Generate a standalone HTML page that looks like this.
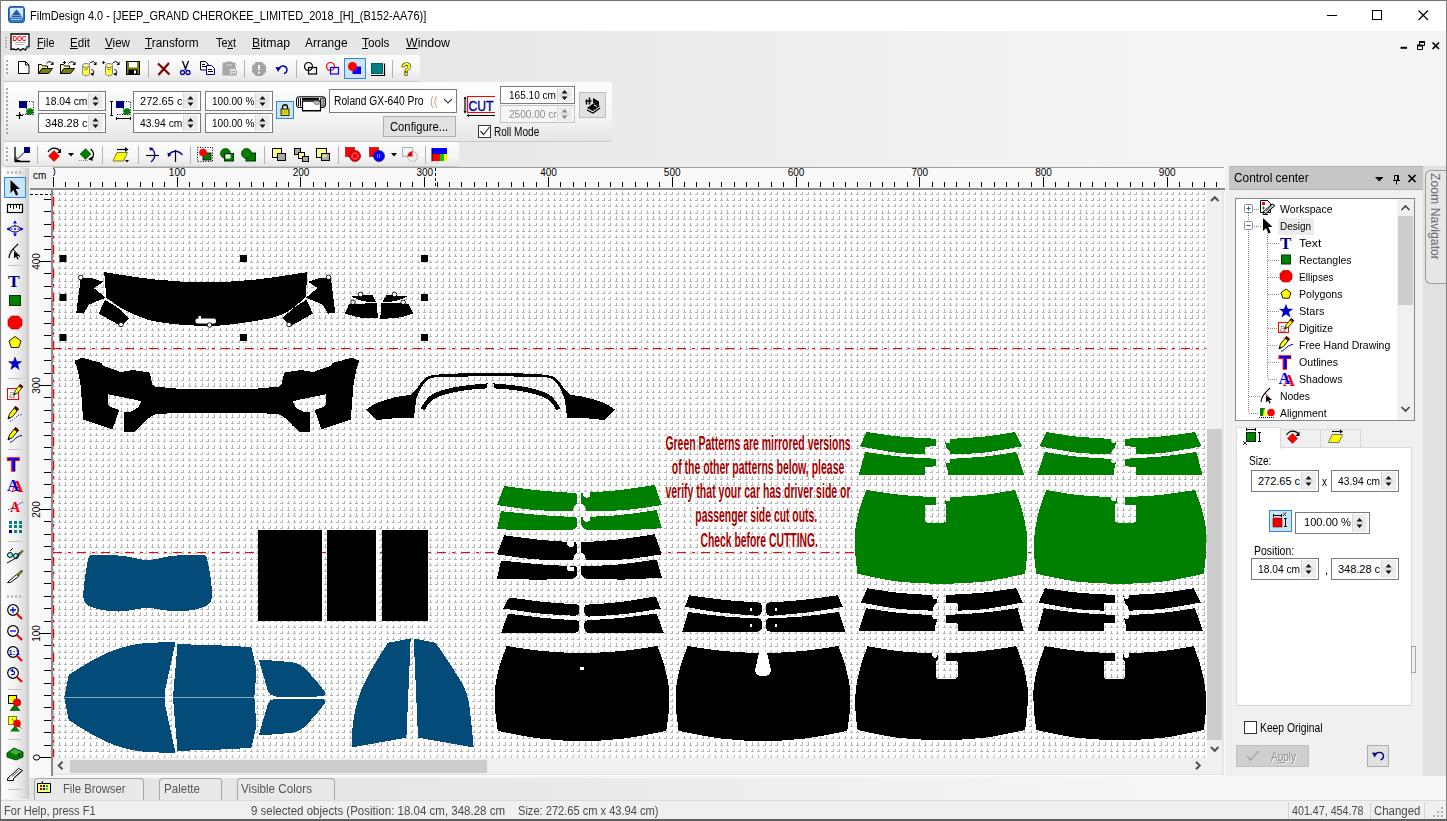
<!DOCTYPE html>
<html><head><meta charset="utf-8"><title>FilmDesign 4.0</title>
<style>*{box-sizing:border-box;margin:0;padding:0}
html,body{width:1447px;height:821px;overflow:hidden}
body{position:relative;background:#f0f0f0;font-family:"Liberation Sans",sans-serif;font-size:12px;color:#000}
.a{position:absolute}
.t{position:absolute;white-space:nowrap}
.tb{position:absolute;border-radius:3px;background:linear-gradient(#fdfdfd,#f6f6f6 55%,#e6e6e6);box-shadow:0 1px 0 #c8c8c8}
u{text-decoration:underline;text-underline-offset:1px}
</style></head>
<body>
<div class="a" style="left:0px;top:0px;width:1447px;height:31px;background:#fff;border-top:1px solid #707070"></div>
<svg class="a" style="left:8px;top:6px" width="18" height="18" viewBox="0 0 18 18"><rect x="0.500" y="0.500" width="16" height="16" rx="2.500" fill="#2d7bd0" stroke="#1b5aa8"/><rect x="2" y="2" width="13" height="9.500" fill="#d8e8f8"/><path d="M8.500,3.500l4.500,5.500h-9z" fill="#1c5bb0"/><rect x="3.500" y="9.500" width="10" height="1.500" fill="#1c5bb0"/><path d="M3.500,13.500h2M6.500,13.500h2M9.500,13.500h2M12.500,13.500h1" stroke="#e8f0ff"/></svg>
<div class="t" style="left:30.3px;top:9px;font-size:12px;line-height:14px;transform:scaleX(0.914);transform-origin:0 0;">FilmDesign 4.0 - [JEEP_GRAND CHEROKEE_LIMITED_2018_[H]_(B152-AA76)]</div>
<svg class="a" style="left:1320px;top:5px" width="120" height="22" viewBox="0 0 120 22"><path d="M7,10.500h10" stroke="#000" fill="none"/><rect x="52.500" y="5.500" width="9" height="9" fill="none" stroke="#000"/><path d="M98.500,5.500l9.500,9.500m0,-9.500l-9.500,9.500" stroke="#000" stroke-width="1.200" fill="none"/></svg>
<div class="a" style="left:1px;top:31px;width:1445px;height:136px;background:linear-gradient(90deg,#e3e3e3,#e9e9e9 35%,#f4f4f4 80%)"></div>
<svg class="a" style="left:4px;top:36px" width="4" height="14" viewBox="0 0 4 14"><path d="M2,1v12" stroke="#a8a8a8" stroke-width="2" stroke-dasharray="1.500 1.500" fill="none"/></svg>
<svg class="a" style="left:10px;top:33px" width="21" height="19" viewBox="0 0 21 19"><path d="M1,1h18v12.500h-2l-1.500,3.500-2.500-1.500-2.500,2-2.500-2-2,1.500-2-1-3,0.500z" fill="#fff" stroke="#000" stroke-width="1.300"/><text x="2.500" y="7.500" font-size="6.500" font-weight="bold" fill="#e00000" font-family="Liberation Sans,sans-serif" textLength="14">DOC</text><path d="M5,9.500h11M5,11.500h9" stroke="#b8b8b8" fill="none"/><rect x="16" y="13" width="2.500" height="2.500" fill="#0a8080"/></svg>
<div class="t" style="left:37.3px;top:36px;font-size:12.5px;line-height:14.5px;transform:scaleX(0.864);transform-origin:0 0;"><u>F</u>ile</div>
<div class="t" style="left:70px;top:36px;font-size:12.5px;line-height:14.5px;transform:scaleX(0.929);transform-origin:0 0;"><u>E</u>dit</div>
<div class="t" style="left:105px;top:36px;font-size:12.5px;line-height:14.5px;transform:scaleX(0.931);transform-origin:0 0;"><u>V</u>iew</div>
<div class="t" style="left:145px;top:36px;font-size:12.5px;line-height:14.5px;transform:scaleX(0.947);transform-origin:0 0;"><u>T</u>ransform</div>
<div class="t" style="left:215.5px;top:36px;font-size:12.5px;line-height:14.5px;transform:scaleX(0.872);transform-origin:0 0;">Te<u>x</u>t</div>
<div class="t" style="left:252px;top:36px;font-size:12.5px;line-height:14.5px;transform:scaleX(0.977);transform-origin:0 0;"><u>B</u>itmap</div>
<div class="t" style="left:305px;top:36px;font-size:12.5px;line-height:14.5px;transform:scaleX(0.956);transform-origin:0 0;">Arran<u>g</u>e</div>
<div class="t" style="left:362px;top:36px;font-size:12.5px;line-height:14.5px;transform:scaleX(0.942);transform-origin:0 0;"><u>T</u>ools</div>
<div class="t" style="left:405.5px;top:36px;font-size:12.5px;line-height:14.5px;transform:scaleX(0.990);transform-origin:0 0;"><u>W</u>indow</div>
<svg class="a" style="left:1395px;top:38px" width="48" height="14" viewBox="0 0 48 14"><path d="M5.500,9.800h6.500" stroke="#000" stroke-width="2" fill="none"/><path d="M24.500,4v3.500h5v-3.500zM22.500,7.500v4h5v-4z" fill="none" stroke="#000"/><path d="M24,4h6M22,7.500h6" stroke="#000" stroke-width="2"/><path d="M37.500,4.500l6.500,6.500m0-6.500l-6.500,6.500" stroke="#000" stroke-width="1.700" fill="none"/></svg>
<div class="tb" style="left:4px;top:55px;width:416px;height:26px"></div>
<div class="tb" style="left:4px;top:82px;width:608px;height:58.500px"></div>
<div class="tb" style="left:4px;top:142px;width:455px;height:24px"></div>
<svg class="a" style="left:5px;top:60px" width="4" height="16" viewBox="0 0 4 16"><path d="M2,0v16" stroke="#a8a8a8" stroke-width="2" stroke-dasharray="2 2" fill="none"/></svg>
<svg class="a" style="left:5px;top:88px" width="4" height="47" viewBox="0 0 4 47"><path d="M2,0v47" stroke="#a8a8a8" stroke-width="2" stroke-dasharray="2 2" fill="none"/></svg>
<svg class="a" style="left:5px;top:147px" width="4" height="14" viewBox="0 0 4 14"><path d="M2,0v14" stroke="#a8a8a8" stroke-width="2" stroke-dasharray="2 2" fill="none"/></svg>
<div class="a" style="left:38px;top:91px;width:68px;height:20px;background:#fff;border:1px solid #7a7a7a"></div>
<div class="a" style="left:88px;top:93px;width:15px;height:16px;background:#ececec;border-left:1px solid #d8d8d8"></div>
<svg class="a" style="left:88px;top:93px" width="15" height="16" viewBox="0 0 15 16"><path d="M4.500,6.5 l3-3.500 3,3.500zM4.500,9.5 l3,3.500 3-3.500z" fill="#111"/><path d="M2,8h11" stroke="#d0d0d0"/></svg>
<div class="t" style="left:44.6px;top:94.5px;font-size:11px;line-height:13px;transform:scaleX(0.937);transform-origin:0 0;color:#000;">18.04 cm</div>
<div class="a" style="left:38px;top:113px;width:68px;height:20px;background:#fff;border:1px solid #7a7a7a"></div>
<div class="a" style="left:88px;top:115px;width:15px;height:16px;background:#ececec;border-left:1px solid #d8d8d8"></div>
<svg class="a" style="left:88px;top:115px" width="15" height="16" viewBox="0 0 15 16"><path d="M4.500,6.5 l3-3.500 3,3.500zM4.500,9.5 l3,3.500 3-3.500z" fill="#111"/><path d="M2,8h11" stroke="#d0d0d0"/></svg>
<div class="t" style="left:44.6px;top:116.5px;font-size:11px;line-height:13px;transform:scaleX(1.005);transform-origin:0 0;color:#000;">348.28 c</div>
<div class="a" style="left:133px;top:91px;width:68px;height:20px;background:#fff;border:1px solid #7a7a7a"></div>
<div class="a" style="left:183px;top:93px;width:15px;height:16px;background:#ececec;border-left:1px solid #d8d8d8"></div>
<svg class="a" style="left:183px;top:93px" width="15" height="16" viewBox="0 0 15 16"><path d="M4.500,6.5 l3-3.500 3,3.500zM4.500,9.5 l3,3.500 3-3.500z" fill="#111"/><path d="M2,8h11" stroke="#d0d0d0"/></svg>
<div class="t" style="left:139.6px;top:94.5px;font-size:11px;line-height:13px;transform:scaleX(1.005);transform-origin:0 0;color:#000;">272.65 c</div>
<div class="a" style="left:133px;top:113px;width:68px;height:20px;background:#fff;border:1px solid #7a7a7a"></div>
<div class="a" style="left:183px;top:115px;width:15px;height:16px;background:#ececec;border-left:1px solid #d8d8d8"></div>
<svg class="a" style="left:183px;top:115px" width="15" height="16" viewBox="0 0 15 16"><path d="M4.500,6.5 l3-3.500 3,3.500zM4.500,9.5 l3,3.500 3-3.500z" fill="#111"/><path d="M2,8h11" stroke="#d0d0d0"/></svg>
<div class="t" style="left:139.6px;top:116.5px;font-size:11px;line-height:13px;transform:scaleX(0.937);transform-origin:0 0;color:#000;">43.94 cm</div>
<div class="a" style="left:205px;top:91px;width:68px;height:20px;background:#fff;border:1px solid #7a7a7a"></div>
<div class="a" style="left:255px;top:93px;width:15px;height:16px;background:#ececec;border-left:1px solid #d8d8d8"></div>
<svg class="a" style="left:255px;top:93px" width="15" height="16" viewBox="0 0 15 16"><path d="M4.500,6.5 l3-3.500 3,3.500zM4.500,9.5 l3,3.500 3-3.500z" fill="#111"/><path d="M2,8h11" stroke="#d0d0d0"/></svg>
<div class="t" style="left:211.6px;top:94.5px;font-size:11px;line-height:13px;transform:scaleX(0.912);transform-origin:0 0;color:#000;">100.00 %</div>
<div class="a" style="left:205px;top:113px;width:68px;height:20px;background:#fff;border:1px solid #7a7a7a"></div>
<div class="a" style="left:255px;top:115px;width:15px;height:16px;background:#ececec;border-left:1px solid #d8d8d8"></div>
<svg class="a" style="left:255px;top:115px" width="15" height="16" viewBox="0 0 15 16"><path d="M4.500,6.5 l3-3.500 3,3.500zM4.500,9.5 l3,3.500 3-3.500z" fill="#111"/><path d="M2,8h11" stroke="#d0d0d0"/></svg>
<div class="t" style="left:211.6px;top:116.5px;font-size:11px;line-height:13px;transform:scaleX(0.912);transform-origin:0 0;color:#000;">100.00 %</div>
<div class="a" style="left:329px;top:89px;width:128px;height:23.5px;background:#fff;border:1px solid #7a7a7a"></div>
<div class="t" style="left:333.5px;top:94px;font-size:12px;line-height:14px;transform:scaleX(0.855);transform-origin:0 0;">Roland GX-640 Pro</div>
<div class="t" style="left:429.5px;top:94px;font-size:12px;line-height:14px;transform:scaleX(0.939);transform-origin:0 0;color:#c8a070;clip-path:inset(0 0 0 0);">((</div>
<div class="a" style="left:383px;top:116px;width:73px;height:20.5px;background:#e1e1e1;border:1px solid #adadad"></div>
<div class="t" style="left:389.5px;top:119.5px;font-size:12px;line-height:14px;transform:scaleX(0.937);transform-origin:0 0;">Configure...</div>
<div class="a" style="left:500px;top:86px;width:75px;height:18px;background:#fff;border:1px solid #7a7a7a"></div>
<div class="a" style="left:557px;top:88px;width:15px;height:14px;background:#ececec;border-left:1px solid #d8d8d8"></div>
<svg class="a" style="left:557px;top:88px" width="15" height="14" viewBox="0 0 15 14"><path d="M4.500,5.5 l3-3.500 3,3.500zM4.500,8.5 l3,3.500 3-3.500z" fill="#111"/><path d="M2,7h11" stroke="#d0d0d0"/></svg>
<div class="t" style="left:509px;top:88.5px;font-size:11px;line-height:13px;transform:scaleX(0.915);transform-origin:0 0;color:#000;">165.10 cm</div>
<div class="a" style="left:500px;top:105px;width:75px;height:18px;background:#f6f6f6;border:1px solid #c4c4c4"></div>
<div class="a" style="left:557px;top:107px;width:15px;height:14px;background:#ececec;border-left:1px solid #d8d8d8"></div>
<svg class="a" style="left:557px;top:107px" width="15" height="14" viewBox="0 0 15 14"><path d="M4.500,5.5 l3-3.500 3,3.500zM4.500,8.5 l3,3.500 3-3.500z" fill="#8a8a8a"/><path d="M2,7h11" stroke="#d0d0d0"/></svg>
<div class="t" style="left:508.5px;top:107.5px;font-size:11px;line-height:13px;transform:scaleX(0.914);transform-origin:0 0;color:#8a8a8a;">2500.00 cr</div>
<div class="t" style="left:494px;top:124.5px;font-size:12px;line-height:14px;transform:scaleX(0.837);transform-origin:0 0;">Roll Mode</div>
<div class="a" style="left:2px;top:168px;width:27px;height:631px;background:linear-gradient(90deg,#fefefe,#f4f4f4 45%,#dcdcdc 85%,#c8c8c8)"></div>
<svg class="a" style="left:0;top:0" width="620" height="800" viewBox="0 0 620 800">
<g transform="translate(18,61)"><path d="M0.500,0.500h7l3.500,3.500v8.500h-10.500z" fill="#fff" stroke="#000"/><path d="M7.500,0.500v3.500h3.500" fill="none" stroke="#000"/></g>
<g transform="translate(38,61)"><path d="M0.5,12.500V3.500h3l1,1.500h5v2.500" fill="#ffffa0" stroke="#000"/><path d="M0.500,12.500l3.500-5h10.500l-4,5z" fill="#808000" stroke="#000"/><path d="M8.500,2.500c2-2.500 5-2.500 6,0.500" fill="none" stroke="#000"/><path d="M15.500,0.500v3.500h-3z" fill="#000"/></g>
<g transform="translate(60,61)"><path d="M0.5,12.500V3.500h3l1,1.500h5v2.500" fill="#ffffa0" stroke="#000"/><path d="M0.500,12.500l3.500-5h10.500l-4,5z" fill="#808000" stroke="#000"/><path d="M8.500,2.500c2-2.500 5-2.500 6,0.500" fill="none" stroke="#000"/><path d="M15.500,0.500v3.500h-3z" fill="#000"/><path d="M3,1.500h3M4.500,0v3" stroke="#000"/></g>
<g transform="translate(82,61)"><path d="M0.500,4.500v8c0,3 7,3 7,0v-8" fill="#ffff40" stroke="#808080"/><ellipse cx="4" cy="4.500" rx="3.500" ry="2" fill="#ffffa0" stroke="#808080"/><path d="M2,7.500l2,1.500 2-1.500" stroke="#909000" fill="none"/><path d="M7.500,2.500c2-2.500 5-2.500 6,0.500" fill="none" stroke="#000"/><path d="M14.500,0.500v3.500h-3z" fill="#000"/><path d="M9.500,8.500c2.500,0.500 3,3 1,5" fill="none" stroke="#000"/><path d="M8,13l3.500,2 0-3.500z" fill="#000"/></g>
<g transform="translate(105,61)"><path d="M0.500,4.500v8c0,3 7,3 7,0v-8" fill="#ffff40" stroke="#808080"/><ellipse cx="4" cy="4.500" rx="3.500" ry="2" fill="#ffffa0" stroke="#808080"/><path d="M2,7.500l2,1.500 2-1.500" stroke="#909000" fill="none"/><path d="M7.500,2.500c2-2.500 5-2.500 6,0.500" fill="none" stroke="#000"/><path d="M14.500,0.500v3.500h-3z" fill="#000"/><path d="M9.500,8.500c2.500,0.500 3,3 1,5" fill="none" stroke="#000"/><path d="M8,13l3.500,2 0-3.500z" fill="#000"/><path d="M-3,1.500h3M-1.500,0v3" stroke="#000"/></g>
<g transform="translate(126,61)"><rect x="0.500" y="0.500" width="13" height="13" fill="#808000" stroke="#000"/><rect x="3" y="1" width="8" height="5.500" fill="#fff"/><rect x="2.500" y="8.500" width="9" height="5" fill="#000"/><rect x="8" y="9.500" width="2" height="3" fill="#fff"/></g>
<path d="M148.500,60v18M244.500,60v18M296.500,60v18M392.500,60v18" stroke="#b4b4b4"/>
<g transform="translate(157,62)"><path d="M1,1.500l11.500,11M12,1l-10.500,12" stroke="#800000" stroke-width="2.200" fill="none"/></g>
<g transform="translate(180,61)"><path d="M2.500,0l3.500,9M8.500,0l-3.500,9" stroke="#000" stroke-width="1.300" fill="none"/><circle cx="2.500" cy="11.500" r="2" fill="none" stroke="#0000a0" stroke-width="1.300"/><circle cx="8" cy="11.500" r="2" fill="none" stroke="#0000a0" stroke-width="1.300"/></g>
<g transform="translate(200,61)"><path d="M0.500,0.500h5l2.500,2.500v6h-7.500z" fill="#fff" stroke="#000"/><path d="M2,3.500h3M2,5.500h4" stroke="#000"/><path d="M6.500,4.500h5l3,3v6h-8z" fill="#fff" stroke="#000080"/><path d="M8,8.500h4M8,10.500h5" stroke="#000"/></g>
<g transform="translate(222,61)"><path d="M1.500,2.500h11v11h-11z" fill="#a6a6a6" stroke="#a6a6a6" stroke-linejoin="round" stroke-width="2"/><rect x="4" y="0.500" width="6" height="3" rx="1" fill="#a6a6a6"/><path d="M4,4h6" stroke="#d8d8d8"/><path d="M7.500,7.500h5l2,2v4.500h-7z" fill="#e4e4e4" stroke="#a6a6a6"/><path d="M9,10.500h4M9,12.500h4" stroke="#a6a6a6"/></g>
<g transform="translate(252,62)"><path d="M4,0h6l4,4v6l-4,4h-6l-4-4v-6z" fill="#a4a4a4"/><rect x="6" y="3" width="2" height="5" fill="#f4f4f4"/><rect x="6" y="9.500" width="2" height="2" fill="#f4f4f4"/></g>
<g transform="translate(275,64)"><path d="M3.500,4.500c3-4 8-3 8.500,1c0,2.500-1.500,3.500-3,4" fill="none" stroke="#0000a0" stroke-width="1.400"/><path d="M0.500,3l5.500,0.500-3,4.500z" fill="#0000a0"/></g>
<g transform="translate(304,62)"><circle cx="4.500" cy="4.500" r="4" fill="none" stroke="#000" stroke-width="1.200"/><rect x="4.500" y="5.500" width="8" height="6.500" fill="none" stroke="#000" stroke-width="1.200"/></g>
<g transform="translate(326,62)"><circle cx="4.500" cy="4.500" r="4" fill="none" stroke="#f00" stroke-width="1.200"/><rect x="4.500" y="5.500" width="8" height="6.500" fill="none" stroke="#00f" stroke-width="1.200"/></g>
<rect x="344.500" y="58.500" width="21" height="20" fill="#cce4f7" stroke="#3287d8"/>
<g transform="translate(348,62)"><rect x="4.500" y="4.500" width="8.500" height="7.500" fill="#00f"/><circle cx="4.500" cy="4.500" r="4.500" fill="#f00"/></g>
<g transform="translate(371,63)"><rect x="0.500" y="0.500" width="11" height="10" fill="#008080" stroke="#006060"/><path d="M0,12.500h13.500v-12" stroke="#000" stroke-width="1.200" fill="none"/></g>
<text x="401.500" y="74.500" font-family="Liberation Sans,sans-serif" font-weight="bold" font-size="16" fill="#ffff00" stroke="#000" stroke-width="1.100" paint-order="stroke">?</text>
<g transform="translate(16,101)"><rect x="3" y="0" width="8" height="7" fill="#000080"/><rect x="10.500" y="0.500" width="7" height="13" fill="none" stroke="#000" stroke-dasharray="1 1.500"/><path d="M4,13.500h13" stroke="#000" stroke-dasharray="1 1.500"/><circle cx="14" cy="10.500" r="3.300" fill="#008000"/><path d="M0,14.500h7M3.500,11v7" stroke="#000" stroke-width="1.200"/></g>
<g transform="translate(113,101)"><rect x="3" y="0" width="8" height="7" fill="#000080"/><rect x="10.500" y="0.500" width="7" height="13" fill="none" stroke="#000" stroke-dasharray="1 1.500"/><path d="M4,13.500h13" stroke="#000" stroke-dasharray="1 1.500"/><circle cx="14" cy="10.500" r="3.300" fill="#008000"/><path d="M-1.500,0v15M-3,0.500h3M-3,14.500h3M3,17.500h15M3.500,16v3M17.500,16v3" stroke="#000" fill="none"/></g>
<rect x="276.500" y="101.500" width="17" height="17" fill="#cce4f7" stroke="#3287d8"/>
<g transform="translate(280,104)"><path d="M2.500,5v-2c0-3 5-3 5,0v2" fill="none" stroke="#000" stroke-width="1.300"/><rect x="1" y="5" width="8" height="6.500" fill="#e8e800" stroke="#000" stroke-width="0.800"/><path d="M2,7h6M2,9h6" stroke="#707000" stroke-dasharray="1 1"/></g>
<g transform="translate(296,94)"><g transform="scale(1,1.080)"><rect x="0.500" y="2.500" width="29" height="10" rx="3" fill="#fff" stroke="#000"/><path d="M2.500,4v7M4.500,3.500v8" stroke="#000"/><rect x="24.500" y="4" width="3.500" height="7" fill="#b0b0b0" stroke="#444"/><path d="M6,3.500h17v2h-17z" fill="#000"/><path d="M6.500,6.500h18v9h-18z" fill="#fff" stroke="#000" stroke-width="1.200"/><path d="M17,6.500h6v3h-4z" fill="#c8c8c8" stroke="#555" stroke-width="0.700"/></g></g>
<g transform="translate(464,96)"><path d="M31,0.500h-27.500v16h27.500" fill="none" stroke="#f00" stroke-width="1.200"/><text x="4.500" y="14.500" font-family="Liberation Sans,sans-serif" font-size="15" fill="#000090" textLength="25" lengthAdjust="spacingAndGlyphs" stroke="#000090" stroke-width="0.400">CUT</text><path d="M1,1.500v15M3,19.500h28" stroke="#000" stroke-width="1.200"/><path d="M-0.500,3l1.500-2.500 1.500,2.500zM-0.500,15l1.500,2.500 1.500-2.500zM5,18l-2.500,1.500 2.500,1.500z" fill="#000"/></g>
<rect x="579.500" y="92.500" width="26" height="25" fill="#e1e1e1" stroke="#bdbdbd"/>
<g transform="translate(584,96)"><path d="M3,12l7-5 6,3-7,5z" fill="#000"/><path d="M3,14l6,3 7-5" fill="none" stroke="#000" stroke-width="1.200"/><path d="M9,2l6,3.500v4l-6-3z" fill="#000"/><path d="M2.500,3.500v5M5.500,1.500v7M1.500,5h6" stroke="#000" stroke-width="1.500"/><path d="M10,9l3,1.500" stroke="#fff"/></g>
<rect x="478.500" y="125.500" width="12" height="12" fill="#fff" stroke="#333"/><path d="M480.500,131l3,3.500 6-7.500" stroke="#333" stroke-width="1.200" fill="none"/>
<path d="M444,99l4,4 4-4" stroke="#444" stroke-width="1.200" fill="none"/>
<path d="M37.500,146v18M102.500,146v18M138.500,146v18M190.500,146v18M264.500,146v18M338.500,146v18M425.500,146v18" stroke="#b4b4b4"/>
<g transform="translate(14,147)"><path d="M1,0v14.500h15" fill="none" stroke="#000" stroke-width="1.300"/><path d="M2,13.500l8-8" stroke="#000"/><path d="M2,9.500v4h4" fill="none" stroke="#000"/><rect x="10" y="0" width="6" height="6" fill="#000080"/></g>
<g transform="translate(47,147)"><path d="M7,3.500l5.500,5.500-5.500,5.500-5.500-5.500z" fill="#f00" stroke="#600" stroke-width="0.500"/><path d="M1,5c3-5 9-5 12-1" fill="none" stroke="#000" stroke-width="1.200"/><path d="M14,1.500v4.500h-4z" fill="#000"/></g>
<path d="M68,153h6l-3,3.500z" fill="#000"/>
<g transform="translate(79,147)"><path d="M6.500,1.500l5.500,5.500-5.500,5.500-5.500-5.500z" fill="#008000" stroke="#040" stroke-width="0.500"/><path d="M11.500,2c4,3 4,8 0,10.500" fill="none" stroke="#000" stroke-width="1.200"/><path d="M9,12l4.500,2 0-4.500z" fill="#000"/><path d="M0,13.500h10" stroke="#888" stroke-dasharray="1 1"/></g>
<g transform="translate(113,147)"><path d="M4,5.500h10.500l-4,8.500h-10.500z" fill="#ffff00" stroke="#555" stroke-width="0.800"/><path d="M4,2.500h10" stroke="#000" stroke-width="1.200"/><path d="M12,0l3.500,2.500-3.500,2.500z" fill="#000"/><path d="M12,13h4l-2,2.500z" fill="#000"/></g>
<g transform="translate(146,147)"><path d="M0,8.500h13" stroke="#000" stroke-width="1.200"/><path d="M5,1c5,4 5,10 0,14" fill="none" stroke="#0000a0" stroke-width="1.300"/><path d="M3,0.500l4.500,0.500-3,3z" fill="#0000a0"/></g>
<g transform="translate(167,147)"><path d="M8.500,3v12" stroke="#000" stroke-width="1.200"/><path d="M1.500,8c4-5 10-5 14,0" fill="none" stroke="#0000a0" stroke-width="1.300"/><path d="M0.500,5.500l0.500,4.500 3.500-2z" fill="#0000a0"/></g>
<g transform="translate(197,147)"><rect x="0.500" y="0.500" width="15" height="14" fill="none" stroke="#000" stroke-dasharray="1 1.500"/><rect x="6" y="6" width="8" height="7" fill="#008000" stroke="#000" stroke-width="0.800"/><circle cx="6" cy="5.500" r="3.800" fill="#f00"/></g>
<g transform="translate(220,148)"><circle cx="5.500" cy="5.500" r="5" fill="#008000" stroke="#003000" stroke-width="0.700"/><rect x="4.500" y="5.500" width="9" height="7.500" fill="#008000" stroke="#003000"/><rect x="5.500" y="6.500" width="5" height="4" fill="#fff"/></g>
<g transform="translate(241,148)"><rect x="5" y="5" width="9.500" height="8" fill="#008000" stroke="#003000"/><circle cx="5.500" cy="5.500" r="5" fill="#008000" stroke="#003000" stroke-width="0.700"/></g>
<g transform="translate(272,148)"><rect x="0.500" y="0.500" width="9" height="9" fill="#ffff80" stroke="#000"/><rect x="5.500" y="5.500" width="8" height="7" fill="#a8a8a8" stroke="#000"/></g>
<g transform="translate(294,148)"><rect x="0.500" y="0.500" width="6" height="6" fill="#a8a8a8" stroke="#000"/><rect x="4.500" y="4.500" width="6" height="6" fill="#ffff80" stroke="#000"/><rect x="8.500" y="8.500" width="6" height="5" fill="#a8a8a8" stroke="#000"/></g>
<g transform="translate(316,148)"><rect x="0.500" y="0.500" width="10" height="9" fill="#ffff80" stroke="#000"/><rect x="5.500" y="5.500" width="8" height="7" fill="#a8a8a8" stroke="#000"/><rect x="6.500" y="6.500" width="4" height="3" fill="#e0e080"/></g>
<g transform="translate(345,147)"><rect x="0.500" y="0.500" width="9" height="9" fill="#f00" stroke="#800" stroke-width="0.600"/><circle cx="10" cy="9" r="5.500" fill="#f00" stroke="#400" stroke-width="0.600"/><circle cx="10" cy="9" r="3" fill="none" stroke="#fff" stroke-dasharray="1 1"/></g>
<g transform="translate(369,147)"><rect x="0.500" y="0.500" width="9" height="9" fill="#f00" stroke="#800" stroke-width="0.600"/><circle cx="10" cy="9" r="5.500" fill="#00f" stroke="#004" stroke-width="0.600"/><path d="M8,8h4M8,10h4" stroke="#fff" stroke-dasharray="1 1"/></g>
<path d="M391,153h6l-3,3.500z" fill="#000"/>
<g transform="translate(402,147)"><rect x="0.500" y="0.500" width="10" height="9" fill="#f4f4f4" stroke="#b0b0b0"/><circle cx="10.500" cy="9.500" r="5" fill="#f0f0f0" stroke="#b8b8b8"/><path d="M10.500,9.500v-5a5,5 0 0 0-5,5z" fill="#e00"/></g>
<g transform="translate(432,148)"><rect x="0" y="0" width="15" height="6" fill="#00f"/><rect x="0" y="6" width="8" height="7" fill="#f00"/><rect x="8" y="6" width="4" height="7" fill="#0c0"/><rect x="12" y="6" width="3" height="7" fill="#ff0"/><path d="M0,0v13.500" stroke="#000"/></g>
<path d="M7,172.500h15M7,596.500h15" stroke="#aaa" stroke-width="2" stroke-dasharray="2 2"/>
<path d="M8,265.500h14M8,378.500h14M8,449.500h14M8,541.500h14M8,689.500h14M8,739.500h14M8,789.500h14" stroke="#c4c4c4"/>
<rect x="4.500" y="177.500" width="21" height="20" fill="#cce4f7" stroke="#3287d8"/>
<g transform="translate(10,180)"><path d="M0.500,0v13l3-3 2.500,5.500 2.200-1-2.500-5.500h4.300z" fill="#000"/></g>
<g transform="translate(7,204)"><rect x="0.500" y="0.500" width="15" height="8" fill="#fff" stroke="#000" stroke-width="1.200"/><path d="M3.500,1v3M6.500,1v4M9.500,1v3M12.500,1v4" stroke="#000"/></g>
<g transform="translate(7,221)"><ellipse cx="8" cy="8" rx="5.500" ry="3" fill="none" stroke="#000" stroke-width="0.900"/><path d="M0,8h16M8,0v15" stroke="#00f" stroke-dasharray="2 1.500"/><path d="M8,-0.500l2,3h-4zM8,15.500l2-3h-4zM-0.500,8l3-2v4zM16.500,8l-3-2v4z" fill="#00f"/></g>
<g transform="translate(8,243)"><path d="M1,15c0.500-6 4-9 9-14" fill="none" stroke="#000" stroke-width="1.200"/><path d="M5,6l7,8" stroke="#000"/><path d="M6,8.500v7l2-2 1.500,3 1.200-0.600-1.500-3h3z" fill="#000"/></g>
<text x="8" y="287" font-family="Liberation Serif,serif" font-weight="bold" font-size="17.500" fill="#000080">T</text>
<rect x="9.500" y="295.500" width="11" height="10" fill="#008000" stroke="#003800"/>
<path d="M11.500,316h7l3.500,3.500v6l-3.500,3.500h-7l-3.500-3.500v-6z" fill="#f00" stroke="#800" stroke-width="0.600"/>
<path d="M15,336.500l6,4.500-2.300,6.500h-7.400l-2.300-6.500z" fill="#ffff00" stroke="#000" stroke-width="0.900"/>
<path d="M15,357l1.700,4.600h4.800l-3.800,3 1.400,4.800-4.100-2.900-4.100,2.900 1.400-4.800-3.800-3h4.800z" fill="#0000e0" stroke="#000060" stroke-width="0.500"/>
<g transform="translate(7,385)"><rect x="0.500" y="3.500" width="11" height="11" fill="#fff" stroke="#f00"/><text x="2" y="13" font-family="Liberation Sans,sans-serif" font-size="11" fill="#888">a</text><g transform="translate(6,-1) scale(0.850)"><path d="M1,13l1.500-5 6-7.500 3,2.500-6,7.500z" fill="#ffff00" stroke="#000" stroke-width="0.900"/><path d="M8.500,0.500l3,2.500-1.500,1.800-3-2.500z" fill="#800000" stroke="#000" stroke-width="0.600"/><path d="M1,13l0.800-2.800 1.600,1.400z" fill="#000"/></g></g>
<g transform="translate(7,406)"><path d="M1,13l1.500-5 6-7.500 3,2.500-6,7.500z" fill="#ffff00" stroke="#000" stroke-width="0.900"/><path d="M8.500,0.500l3,2.500-1.500,1.800-3-2.500z" fill="#800000" stroke="#000" stroke-width="0.600"/><path d="M1,13l0.800-2.800 1.600,1.400z" fill="#000"/><path d="M3,15c3,1 5-6 12-6.500" fill="none" stroke="#0000a0" stroke-dasharray="1 1.500"/></g>
<g transform="translate(7,427)"><path d="M1,13l1.500-5 6-7.500 3,2.500-6,7.500z" fill="#ffff00" stroke="#000" stroke-width="0.900"/><path d="M8.500,0.500l3,2.500-1.500,1.800-3-2.500z" fill="#800000" stroke="#000" stroke-width="0.600"/><path d="M1,13l0.800-2.800 1.600,1.400z" fill="#000"/><path d="M3,15c3,1 5-6 12-6.500" fill="none" stroke="#000080"/></g>
<text x="7.500" y="470.500" font-family="Liberation Sans,sans-serif" font-weight="bold" font-size="19" fill="#0000f0" stroke="#f00" stroke-width="1.600" paint-order="stroke">T</text>
<text x="11" y="492" font-family="Liberation Serif,serif" font-weight="bold" font-size="17" fill="#f00">A</text><text x="7" y="490.500" font-family="Liberation Serif,serif" font-weight="bold" font-size="17" fill="#00f">A</text>
<text x="10" y="512" font-family="Liberation Serif,serif" font-weight="bold" font-size="14" fill="#f00">A</text><path d="M8,510l15-8" stroke="#00a" stroke-dasharray="1 1"/>
<g fill="#008080"><rect x="9" y="521" width="3" height="3"/><rect x="9" y="525" width="3" height="3"/><rect x="9" y="530" width="3" height="3"/><rect x="14" y="521" width="3" height="3"/><rect x="14" y="525" width="3" height="3"/><rect x="14" y="530" width="3" height="3"/><rect x="19" y="521" width="3" height="3"/><rect x="19" y="525" width="3" height="3"/><rect x="19" y="530" width="3" height="3"/></g><rect x="9" y="530" width="3" height="3" fill="#000080"/>
<g transform="translate(7,548)"><circle cx="3" cy="7" r="2.500" fill="#80ffff" stroke="#000"/><circle cx="9" cy="8" r="2.500" fill="#80ffff" stroke="#000"/><path d="M0,15l9-5 4-6" fill="none" stroke="#000"/><path d="M11,6l4.500-4 0.500,1.500-3.500,4z" fill="#909020" stroke="#000" stroke-width="0.500"/><path d="M3,3l3-3" stroke="#000"/></g>
<g transform="translate(7,569)"><path d="M0.500,13.500l9-8 2,2-8,6z" fill="#fff" stroke="#000"/><path d="M10,5.500l4.500-4.500 1,1.500-4,4.500z" fill="#909020" stroke="#000" stroke-width="0.600"/></g>
<g transform="translate(7,604)"><circle cx="6" cy="6" r="5.300" fill="#fff" stroke="#000" stroke-width="1.200"/><path d="M3,6h6M6,3v6" stroke="#0000e0" stroke-width="1.300"/><path d="M10,10l5,5" stroke="#e00000" stroke-width="2"/></g>
<g transform="translate(7,625)"><circle cx="6" cy="6" r="5.300" fill="#fff" stroke="#000" stroke-width="1.200"/><path d="M3,6h6" stroke="#0000e0" stroke-width="1.300"/><path d="M10,10l5,5" stroke="#e00000" stroke-width="2"/></g>
<g transform="translate(7,646)"><circle cx="6" cy="6" r="5.300" fill="#fff" stroke="#000" stroke-width="1.200"/><text x="1.300" y="9" font-family="Liberation Sans,sans-serif" font-size="8" font-weight="bold" fill="#00e">1:1</text><path d="M10,10l5,5" stroke="#e00000" stroke-width="2"/></g>
<g transform="translate(7,667)"><circle cx="6" cy="6" r="5.300" fill="#fff" stroke="#000" stroke-width="1.200"/><path d="M4,7.500c4,1 5-3 1-4" fill="none" stroke="#00e" stroke-width="1.200"/><path d="M3,3.500l3-2v4z" fill="#00e"/><path d="M10,10l5,5" stroke="#e00000" stroke-width="2"/></g>
<g transform="translate(8,695)"><rect x="0.500" y="0.500" width="8" height="8" fill="#ffff00" stroke="#000"/><path d="M2,15.500l5-6 5,6z" fill="#008000" stroke="#003000" stroke-width="0.600"/><circle cx="9" cy="7.500" r="3.800" fill="#f00" stroke="#800" stroke-width="0.500"/></g>
<g transform="translate(8,716)"><rect x="0.500" y="0.500" width="8" height="8" fill="#ffff00" stroke="#000" stroke-dasharray="1 1"/><path d="M2,15.500l5-6 5,6z" fill="#008000"/><circle cx="9" cy="7.500" r="3.800" fill="#f00"/><path d="M4,3l10,10" stroke="#000" stroke-dasharray="1 1"/></g>
<g transform="translate(7,746)"><path d="M0,7l7-5 9,4v5l-7,3-9-3z" fill="#008000" stroke="#002800" stroke-width="0.800"/><path d="M3,6l5-3 6,3-5,3z" fill="#40b040"/><rect x="11" y="7.500" width="2" height="3" fill="#002800"/></g>
<g transform="translate(7,767)"><path d="M0.500,11.500l11-10 4,2-10,9z" fill="#fff" stroke="#000"/><path d="M0.500,11.500v2h6v-2" fill="#fff" stroke="#000"/><path d="M5,9.500l7-6M7,10.500l7-6" stroke="#000" stroke-width="0.700"/></g>
</svg>
<div class="a" style="left:30px;top:167px;width:1195px;height:22px;background:#f9f9f9;border-top:1px solid #a0a0a0"></div>
<div class="a" style="left:30px;top:167px;width:23px;height:609px;background:#f9f9f9"></div>
<div class="a" style="left:30px;top:168px;width:22px;height:20px;background:#f0f0f0"></div>
<div class="a" style="left:53px;top:190px;width:1154px;height:568px;background:#fff"></div>
<div class="a" style="left:1207px;top:190px;width:17px;height:568px;background:#f0f0f0"></div>
<div class="a" style="left:53px;top:758px;width:1172px;height:18px;background:#f0f0f0"></div>
<div class="a" style="left:1207px;top:429px;width:15px;height:311px;background:#cdcdcd"></div>
<div class="a" style="left:70px;top:760px;width:417px;height:13px;background:#cdcdcd"></div>
<div class="a" style="left:1222px;top:190px;width:1.5px;height:585px;background:#e6e6e6"></div>
<div class="a" style="left:1223.5px;top:167px;width:1.5px;height:609px;background:#fbfbfb"></div>
<div class="a" style="left:53px;top:774px;width:1170.5px;height:1px;background:#e2e2e2"></div>
<div class="a" style="left:30px;top:775px;width:1195px;height:1.5px;background:#fbfbfb"></div>
<svg class="a" style="left:0;top:0" width="1447" height="821" viewBox="0 0 1447 821">
<defs><pattern id="g" x="49" y="159" width="99" height="99" patternUnits="userSpaceOnUse"><path d="M3,4h3M4,1v3M9,4h3M10,1v3M15,4h3M16,1v3M21,4h3M23,1v3M27,4h3M29,1v3M33,4h3M35,1v3M40,4h3M41,1v3M46,4h3M47,1v3M52,4h3M54,1v3M58,4h3M60,1v3M64,4h3M66,1v3M71,4h3M72,1v3M77,4h3M78,1v3M83,4h3M84,1v3M89,4h3M91,1v3M95,4h3M97,1v3M3,10h3M4,7v3M9,10h3M10,7v3M15,10h3M16,7v3M21,10h3M23,7v3M27,10h3M29,7v3M33,10h3M35,7v3M40,10h3M41,7v3M46,10h3M47,7v3M52,10h3M54,7v3M58,10h3M60,7v3M64,10h3M66,7v3M71,10h3M72,7v3M77,10h3M78,7v3M83,10h3M84,7v3M89,10h3M91,7v3M95,10h3M97,7v3M3,16h3M4,13v3M9,16h3M10,13v3M15,16h3M16,13v3M21,16h3M23,13v3M27,16h3M29,13v3M33,16h3M35,13v3M40,16h3M41,13v3M46,16h3M47,13v3M52,16h3M54,13v3M58,16h3M60,13v3M64,16h3M66,13v3M71,16h3M72,13v3M77,16h3M78,13v3M83,16h3M84,13v3M89,16h3M91,13v3M95,16h3M97,13v3M3,23h3M4,19v3M9,23h3M10,19v3M15,23h3M16,19v3M21,23h3M23,19v3M27,23h3M29,19v3M33,23h3M35,19v3M40,23h3M41,19v3M46,23h3M47,19v3M52,23h3M54,19v3M58,23h3M60,19v3M64,23h3M66,19v3M71,23h3M72,19v3M77,23h3M78,19v3M83,23h3M84,19v3M89,23h3M91,19v3M95,23h3M97,19v3M3,29h3M4,25v3M9,29h3M10,25v3M15,29h3M16,25v3M21,29h3M23,25v3M27,29h3M29,25v3M33,29h3M35,25v3M40,29h3M41,25v3M46,29h3M47,25v3M52,29h3M54,25v3M58,29h3M60,25v3M64,29h3M66,25v3M71,29h3M72,25v3M77,29h3M78,25v3M83,29h3M84,25v3M89,29h3M91,25v3M95,29h3M97,25v3M3,35h3M4,32v3M9,35h3M10,32v3M15,35h3M16,32v3M21,35h3M23,32v3M27,35h3M29,32v3M33,35h3M35,32v3M40,35h3M41,32v3M46,35h3M47,32v3M52,35h3M54,32v3M58,35h3M60,32v3M64,35h3M66,32v3M71,35h3M72,32v3M77,35h3M78,32v3M83,35h3M84,32v3M89,35h3M91,32v3M95,35h3M97,32v3M3,41h3M4,38v3M9,41h3M10,38v3M15,41h3M16,38v3M21,41h3M23,38v3M27,41h3M29,38v3M33,41h3M35,38v3M40,41h3M41,38v3M46,41h3M47,38v3M52,41h3M54,38v3M58,41h3M60,38v3M64,41h3M66,38v3M71,41h3M72,38v3M77,41h3M78,38v3M83,41h3M84,38v3M89,41h3M91,38v3M95,41h3M97,38v3M3,47h3M4,44v3M9,47h3M10,44v3M15,47h3M16,44v3M21,47h3M23,44v3M27,47h3M29,44v3M33,47h3M35,44v3M40,47h3M41,44v3M46,47h3M47,44v3M52,47h3M54,44v3M58,47h3M60,44v3M64,47h3M66,44v3M71,47h3M72,44v3M77,47h3M78,44v3M83,47h3M84,44v3M89,47h3M91,44v3M95,47h3M97,44v3M3,54h3M4,50v3M9,54h3M10,50v3M15,54h3M16,50v3M21,54h3M23,50v3M27,54h3M29,50v3M33,54h3M35,50v3M40,54h3M41,50v3M46,54h3M47,50v3M52,54h3M54,50v3M58,54h3M60,50v3M64,54h3M66,50v3M71,54h3M72,50v3M77,54h3M78,50v3M83,54h3M84,50v3M89,54h3M91,50v3M95,54h3M97,50v3M3,60h3M4,56v3M9,60h3M10,56v3M15,60h3M16,56v3M21,60h3M23,56v3M27,60h3M29,56v3M33,60h3M35,56v3M40,60h3M41,56v3M46,60h3M47,56v3M52,60h3M54,56v3M58,60h3M60,56v3M64,60h3M66,56v3M71,60h3M72,56v3M77,60h3M78,56v3M83,60h3M84,56v3M89,60h3M91,56v3M95,60h3M97,56v3M3,66h3M4,63v3M9,66h3M10,63v3M15,66h3M16,63v3M21,66h3M23,63v3M27,66h3M29,63v3M33,66h3M35,63v3M40,66h3M41,63v3M46,66h3M47,63v3M52,66h3M54,63v3M58,66h3M60,63v3M64,66h3M66,63v3M71,66h3M72,63v3M77,66h3M78,63v3M83,66h3M84,63v3M89,66h3M91,63v3M95,66h3M97,63v3M3,72h3M4,69v3M9,72h3M10,69v3M15,72h3M16,69v3M21,72h3M23,69v3M27,72h3M29,69v3M33,72h3M35,69v3M40,72h3M41,69v3M46,72h3M47,69v3M52,72h3M54,69v3M58,72h3M60,69v3M64,72h3M66,69v3M71,72h3M72,69v3M77,72h3M78,69v3M83,72h3M84,69v3M89,72h3M91,69v3M95,72h3M97,69v3M3,78h3M4,75v3M9,78h3M10,75v3M15,78h3M16,75v3M21,78h3M23,75v3M27,78h3M29,75v3M33,78h3M35,75v3M40,78h3M41,75v3M46,78h3M47,75v3M52,78h3M54,75v3M58,78h3M60,75v3M64,78h3M66,75v3M71,78h3M72,75v3M77,78h3M78,75v3M83,78h3M84,75v3M89,78h3M91,75v3M95,78h3M97,75v3M3,84h3M4,81v3M9,84h3M10,81v3M15,84h3M16,81v3M21,84h3M23,81v3M27,84h3M29,81v3M33,84h3M35,81v3M40,84h3M41,81v3M46,84h3M47,81v3M52,84h3M54,81v3M58,84h3M60,81v3M64,84h3M66,81v3M71,84h3M72,81v3M77,84h3M78,81v3M83,84h3M84,81v3M89,84h3M91,81v3M95,84h3M97,81v3M3,91h3M4,87v3M9,91h3M10,87v3M15,91h3M16,87v3M21,91h3M23,87v3M27,91h3M29,87v3M33,91h3M35,87v3M40,91h3M41,87v3M46,91h3M47,87v3M52,91h3M54,87v3M58,91h3M60,87v3M64,91h3M66,87v3M71,91h3M72,87v3M77,91h3M78,87v3M83,91h3M84,87v3M89,91h3M91,87v3M95,91h3M97,87v3M3,97h3M4,94v3M9,97h3M10,94v3M15,97h3M16,94v3M21,97h3M23,94v3M27,97h3M29,94v3M33,97h3M35,94v3M40,97h3M41,94v3M46,97h3M47,94v3M52,97h3M54,94v3M58,97h3M60,94v3M64,97h3M66,94v3M71,97h3M72,94v3M77,97h3M78,94v3M83,97h3M84,94v3M89,97h3M91,94v3M95,97h3M97,94v3" transform="translate(0,0.500)" stroke="#b6b6b6" stroke-width="1" fill="none" shape-rendering="crispEdges"/></pattern><clipPath id="cc"><rect x="53" y="190" width="1153.500" height="567.500"/></clipPath><clipPath id="c0"><rect x="53" y="166" width="20" height="20"/></clipPath></defs>
<g clip-path="url(#cc)">
<rect x="53" y="190" width="1154" height="568" fill="url(#g)"/>
<path d="M53,348.500H1207M53,552.500H1207" stroke="#f00" stroke-width="1" stroke-dasharray="9 6 2.500 6.500" fill="none" shape-rendering="crispEdges"/>
<g shape-rendering="crispEdges"><path fill="#000" d="M104.2,272.1C112.7,273.3 138.1,277.8 155,279.5C171.9,281.2 189,282.3 205.8,282.3C222.6,282.3 239.1,281.2 256,279.5C272.9,277.8 298.8,273.3 307.4,272.1L305.7,297.3C301.7,300.2 292.4,310.5 281.5,314.8C270.6,319.1 252.6,321.4 240,323.2C227.4,325 219.7,326.1 205.8,325.9C191.9,325.7 170.1,324.3 156.8,321.8C143.6,319.3 134.7,314.8 126.3,310.8C117.9,306.8 109.6,299.9 106.3,297.7Z M80.7,278.3L92.5,278.3L103.5,281.8L93.9,288L105.6,297.7L89,304.6L83.5,313.6L76.3,312.9Z M330.9,278.3L319.1,278.3L308.1,281.8L317.7,288L306,297.7L322.6,304.6L328.1,313.6L335.3,312.9Z M104.9,299.8C107.1,301.2 114,304.9 118,308C122,311.1 127.2,316.7 129.1,318.4L120.8,326L98.7,313.6Z M306.7,299.8C304.5,301.2 297.6,304.9 293.6,308C289.6,311.1 284.4,316.7 282.5,318.4L290.8,326L312.9,313.6Z M351.3,296.3L372.7,294.9L376.1,301.8C374.6,301.8 370,302 367,301.6C364,301.2 360.6,300.5 358,299.6C355.4,298.7 352.4,296.9 351.3,296.3Z M349.2,303.9L376.8,303.2L377.9,318.4C374.9,318.2 365.5,318.3 360,317.5C354.5,316.7 347.5,314.2 345,313.6Z M386.5,294.9L407.2,296.3C406,296.9 402.7,298.7 400,299.6C397.3,300.5 393.9,301.2 391,301.6C388.1,302 383.8,301.8 382.4,301.8Z M381.3,303.2L408.6,303.6L413,313.6C410.5,314.3 403.4,317 398,317.8C392.6,318.6 383.2,318.6 380.3,318.7Z M217,389.2C212.5,389.2 197.8,389.6 190,389.4C182.2,389.2 175.8,388.5 170,388C164.2,387.5 157.8,386.8 155.4,386.5C154.9,386.2 153.1,385.2 152.5,384.5C151.9,383.8 152,382.7 151.9,382.3L149.8,372.6C148.2,372.3 143,371.4 140,371C137,370.6 134.2,370.3 131.9,370.3C129.6,370.3 127.8,370.9 126,371.2C124.2,371.5 121.7,371.9 120.8,372L102.8,365.7L101.5,363L82.1,357.7L74.5,360.9C75.1,362.6 77,367 78,371.3C79,375.6 80.2,384 80.7,386.5L83.2,419.6L112.5,429.3L119.4,410C117.8,409.4 112,407.9 110,406.5C108,405.1 108,403.7 107.7,401.7C107.4,399.7 108.3,395.5 108.4,394.3L140.9,401C140.6,401.9 140.3,404.8 138.8,406.5C137.3,408.2 134.4,410.4 131.9,411.3C129.4,412.2 125.2,412.1 123.9,412.2L123.9,432.4L134.6,432.1C135.8,431 139.2,427.8 141.5,425.5C143.8,423.2 146.5,420.1 148.5,418.3C150.5,416.6 151.7,415.8 153.5,415C155.3,414.2 158.5,413.9 159.5,413.7C164.6,413.6 180.4,413.1 190,413C199.6,412.9 212.5,412.9 217,412.9Z M217,389.2C221.5,389.2 236.2,389.6 244,389.4C251.8,389.2 258.2,388.5 264,388C269.8,387.5 276.2,386.8 278.6,386.5C279.1,386.2 280.9,385.2 281.5,384.5C282.1,383.8 282,382.7 282.1,382.3L284.2,372.6C285.8,372.3 291,371.4 294,371C297,370.6 299.8,370.3 302.1,370.3C304.4,370.3 306.1,370.9 308,371.2C309.9,371.5 312.3,371.9 313.2,372L331.2,365.7L332.5,363L351.9,357.7L359.5,360.9C358.9,362.6 357,367 356,371.3C355,375.6 353.8,384 353.3,386.5L350.8,419.6L321.5,429.3L314.6,410C316.2,409.4 322.1,407.9 324,406.5C325.9,405.1 326,403.7 326.3,401.7C326.6,399.7 325.7,395.5 325.6,394.3L293.1,401C293.5,401.9 293.7,404.8 295.2,406.5C296.7,408.2 299.6,410.4 302.1,411.3C304.6,412.2 308.8,412.1 310.1,412.2L310.1,432.4L299.4,432.1C298.2,431 294.8,427.8 292.5,425.5C290.2,423.2 287.5,420.1 285.5,418.3C283.5,416.6 282.3,415.8 280.5,415C278.7,414.2 275.5,413.9 274.5,413.7C269.4,413.6 253.6,413.1 244,413C234.4,412.9 221.5,412.9 217,412.9Z M366.3,409.4L376.2,420.2C379.3,419.9 388.7,418.6 395,418.3C401.3,418 410.8,418.4 413.9,418.4L416.1,399.5C416.9,397.6 419.3,391.1 421,388C422.7,384.9 425,382.2 426.5,380.6C428,379 428.5,378.9 430,378.3C431.5,377.8 434.6,377.5 435.5,377.3C439.9,377.2 452.8,376.8 462,376.6C471.2,376.4 481,376.3 490.5,376.3C500,376.3 509.8,376.4 519,376.6C528.2,376.8 541.1,377.2 545.5,377.3C546.4,377.5 549.5,377.8 551,378.3C552.5,378.9 553,379 554.5,380.6C556,382.2 558.3,384.9 560,388C561.7,391.1 564.1,397.6 564.9,399.5L567.1,418.4C570.2,418.4 579.7,418 586,418.3C592.3,418.6 601.7,419.9 604.8,420.2L614.7,409.4C612.9,408.3 607.5,404.6 604,403C600.5,401.4 597.3,400.6 593.6,399.5C589.9,398.4 585.9,397.2 582,396.5C578.1,395.8 572.2,395.2 570.2,395C569.5,394.3 567.2,392.3 566,391C564.8,389.7 564.4,388.8 563.1,387C561.8,385.2 559.6,381.8 558,380C556.4,378.2 554,377.1 553.2,376.5C552.2,376.2 549.2,375.4 547,375C544.8,374.6 540.9,374.5 539.7,374.4C535.6,374.2 523.2,373.4 515,373.2C506.8,372.9 498.7,372.9 490.5,372.9C482.3,372.9 474.2,372.9 466,373.2C457.8,373.4 445.4,374.2 441.3,374.4C440.1,374.5 436.2,374.6 434,375C431.8,375.4 429.6,375.7 427.8,376.5C426,377.3 424.6,378.2 423,380C421.4,381.8 419.2,385.2 417.9,387C416.6,388.8 416.2,389.7 415,391C413.8,392.3 411.5,394.3 410.8,395C408.8,395.2 403,395.8 399,396.5C395,397.2 390.7,398.4 387,399.5C383.3,400.6 380.4,401.4 377,403C373.6,404.6 368.1,408.3 366.3,409.4Z M420.7,408.2L425,410.3C425.5,409.3 426.9,406.1 428,404.5C429.1,402.9 430.2,401.7 431.9,400.4C433.6,399.1 435.6,397.9 438,396.8C440.4,395.8 443,395 446.3,394.1C449.6,393.2 453.8,392.2 458,391.5C462.2,390.8 466.6,390.1 471.4,389.6C476.2,389.1 484.3,388.6 486.9,388.4L487.6,383.4C484.3,383.7 473.2,384.6 467.8,385.2C462.4,385.8 458.9,386.5 455,387.2C451.1,387.9 447.7,388.7 444.5,389.6C441.3,390.5 438.4,391.4 436,392.5C433.6,393.6 431.9,394.4 430.1,395.9C428.3,397.4 426.6,399.4 425,401.5C423.4,403.6 421.4,407.1 420.7,408.2Z M560.3,408.2L556,410.3C555.5,409.3 554.1,406.1 553,404.5C551.9,402.9 550.8,401.7 549.1,400.4C547.4,399.1 545.4,397.9 543,396.8C540.6,395.8 538,395 534.7,394.1C531.4,393.2 527.2,392.2 523,391.5C518.8,390.8 514.4,390.1 509.6,389.6C504.8,389.1 496.7,388.6 494.1,388.4L493.4,383.4C496.7,383.7 507.8,384.6 513.2,385.2C518.6,385.8 522.1,386.5 526,387.2C529.9,387.9 533.3,388.7 536.5,389.6C539.7,390.5 542.6,391.4 545,392.5C547.4,393.6 549.1,394.4 550.9,395.9C552.7,397.4 554.4,399.4 556,401.5C557.6,403.6 559.6,407.1 560.3,408.2Z"/>
<path fill="#008000" d="M504.1,486C510.1,486.8 528,489.3 540,490.5C552,491.7 570.3,492.7 576.4,493.1L577.4,503.5C576.9,503.9 575.3,504.7 574.5,506C573.7,507.3 572.8,510.3 572.4,511.2C566.2,511 547.6,511 535,510C522.4,509 503.3,505.9 497,505.1Z M581.4,493.1C587.8,492.6 607.8,491.4 620,490C632.2,488.6 648.9,485.8 654.7,485L661.8,505.1C655.7,505.9 637.6,509 625,510C612.4,511 592.8,511 586.4,511.2C586.1,510.3 585.3,507.3 584.5,506C583.7,504.7 581.9,503.9 581.4,503.5Z M501,511.2C507.5,511.8 527.4,514 540,515C552.6,516 570.3,516.8 576.4,517.2L577.4,525.2C577.1,525.7 576.3,527.3 575.5,528C574.7,528.7 572.9,529.3 572.4,529.6C566.2,529.7 547.6,530.4 535,530.3C522.4,530.2 503.3,529.4 497,529.2Z M581.4,517.2C587.8,516.8 607.5,516.2 620,515C632.5,513.8 650.6,511 656.7,510.2L661.8,528.2C655.7,528.5 637.6,530 625,530.2C612.4,530.4 592.8,529.7 586.4,529.6C585.9,529.3 584.3,528.7 583.5,528C582.7,527.3 581.8,525.7 581.4,525.2Z"/>
<path fill="#fff" d="M583.3,492.6v3.2c0,2.6 7,2.6 7,0v-4.6z M583.3,516.7v3.2c0,2.6 7,2.6 7,0v-4.6z"/>
<path fill="#000" d="M504.1,535.3C510.1,536 528,538.6 540,539.8C552,541 570.3,542 576.4,542.4L577.4,552.8C576.9,553.2 575.3,554 574.5,555.3C573.7,556.6 572.8,559.6 572.4,560.5C566.2,560.3 547.6,560.3 535,559.3C522.4,558.3 503.3,555.2 497,554.4Z M581.4,542.4C587.8,541.9 607.8,540.6 620,539.3C632.2,537.9 648.9,535.1 654.7,534.3L661.8,554.4C655.7,555.2 637.6,558.3 625,559.3C612.4,560.3 592.8,560.3 586.4,560.5C586.1,559.6 585.3,556.6 584.5,555.3C583.7,554 581.9,553.2 581.4,552.8Z M501,560.5C507.5,561.1 527.4,563.3 540,564.3C552.6,565.3 570.3,566.1 576.4,566.5L577.4,574.5C577.1,575 576.3,576.6 575.5,577.3C574.7,578 572.9,578.6 572.4,578.9C566.2,579 547.6,579.7 535,579.6C522.4,579.5 503.3,578.7 497,578.5Z M581.4,566.5C587.8,566.1 607.5,565.5 620,564.3C632.5,563.1 650.6,560.3 656.7,559.5L661.8,577.5C655.7,577.8 637.6,579.3 625,579.5C612.4,579.7 592.8,579 586.4,578.9C585.9,578.6 584.3,578 583.5,577.3C582.7,576.6 581.8,575 581.4,574.5Z"/>
<path fill="#fff" d="M567.3,541.6v3.4c0,2.6 7,2.6 7,0v-2.4z M567.3,566.1v3.4c0,2.6 7,2.6 7,0v-2.4z"/>
<path fill="#000" d="M509.1,597.5C515.1,598.2 533.9,600.9 545,602C556.1,603.1 570.8,603.9 576,604.3C576.4,604.4 578,604.7 578.6,605.2C579.2,605.7 579.3,607.1 579.4,607.5L579.4,612.5C579.2,612.9 578.7,614.2 578,614.8C577.3,615.3 575.8,615.6 575.4,615.8C569.5,615.4 552,614.7 540,613.5C528,612.3 509.2,609.4 503.1,608.6Z M655.7,596.5C649.8,597.4 631.3,600.6 620,602C608.7,603.4 593.3,604.2 588,604.6C587.5,604.8 585.8,605 585.2,605.5C584.6,606 584.5,607.4 584.4,607.8L584.4,613C584.7,613.4 585.3,614.9 586,615.5C586.7,616.1 588,616.4 588.4,616.6C594.5,616.2 612.9,615.3 625,614C637.1,612.7 654.8,609.5 660.8,608.6Z M508.1,613.6C514.2,614.3 533.7,616.9 545,618C556.3,619.1 570.8,619.9 576,620.3C576.4,620.4 578,620.7 578.6,621.2C579.2,621.7 579.3,623.1 579.4,623.5L579.4,629C579.2,629.4 578.7,630.8 578,631.5C577.3,632.2 575.8,632.8 575.4,633.1L501,633.1Z M656.7,613.6C650.6,614.3 631.5,616.9 620,618C608.5,619.1 593.3,619.9 588,620.3C587.5,620.4 585.8,620.7 585.2,621.2C584.6,621.7 584.5,623.1 584.4,623.5L584.4,629C584.7,629.4 585.3,630.8 586,631.5C586.7,632.2 588,632.8 588.4,633.1L663.8,633.1Z M506.6,646C512.8,646.9 531.4,650.1 544,651.2C556.6,652.4 569.3,652.9 582,652.9C594.7,652.9 607.4,652.4 620,651.2C632.6,650.1 651.2,646.9 657.4,646C658.6,649.3 662.5,659.1 664.4,666C666.3,672.9 668.1,680.4 668.9,687.4C669.7,694.4 669.4,700.8 669,708C668.6,715.2 666.8,727.1 666.3,730.9C659.2,732.2 638,736.8 624,738.5C610,740.2 596,741.1 582,741.1C568,741.1 554,740.2 540,738.5C526,736.8 504.8,732.2 497.7,730.9C497.3,727.1 495.4,715.2 495,708C494.6,700.8 494.3,694.4 495.1,687.4C495.9,680.4 497.7,672.9 499.6,666C501.5,659.1 505.4,649.3 506.6,646Z M687.6,646C693.8,646.9 712.4,650.1 725,651.2C737.6,652.4 750.3,652.9 763,652.9C775.7,652.9 788.4,652.4 801,651.2C813.6,650.1 832.2,646.9 838.4,646C839.6,649.3 843.5,659.1 845.4,666C847.3,672.9 849.1,680.4 849.9,687.4C850.7,694.4 850.4,700.8 850,708C849.6,715.2 847.8,727.1 847.3,730.9C840.2,732.2 819,736.8 805,738.5C791,740.2 777,741.1 763,741.1C749,741.1 735,740.2 721,738.5C707,736.8 685.8,732.2 678.7,730.9C678.2,727.1 676.4,715.2 676,708C675.6,700.8 675.3,694.4 676.1,687.4C676.9,680.4 678.7,672.9 680.6,666C682.5,659.1 686.4,649.3 687.6,646Z"/>
<path fill="#fff" d="M759.3,651.5 L755.3,669 C754.5,673.5 757,675.9 763,675.9 C769,675.9 771.5,673.5 770.7,669 L766.7,651.5Z M580.3,667.2h3.4v3.2h-3.4z"/>
<path fill="#000" d="M689.4,595.3C695.3,596.1 713.5,598.8 725,600C736.5,601.2 752.9,602.1 758.5,602.5C758.9,602.6 760.2,602.6 760.7,603C761.2,603.4 761.4,604.5 761.5,604.8L761.5,612C761.2,612.4 760.7,614 760,614.6C759.3,615.2 757.7,615.6 757.2,615.8C751,615.2 732.1,614 720,612.5C707.9,611 690.7,607.8 684.8,606.8Z M837.7,595.3C831.8,596.1 813.5,598.8 802,600C790.5,601.2 774.2,602.1 768.7,602.5C768.4,602.6 767.3,602.6 766.9,603C766.5,603.4 766.3,604.5 766.2,604.8L766.2,612C766.4,612.4 766.9,614 767.5,614.6C768.1,615.2 769.6,615.6 770,615.8C776.2,615.2 794.9,614 807,612.5C819.1,611 836.8,607.8 842.8,606.8Z M688.2,612C694.3,612.8 713.3,615.4 725,616.5C736.7,617.6 752.9,618.1 758.5,618.4C758.9,618.5 760.2,618.6 760.7,619C761.2,619.4 761.4,620.5 761.5,620.8L761.5,628.6C761.2,629 760.7,630.3 760,630.8C759.3,631.3 757.7,631.5 757.2,631.6L682.3,631.6Z M839,612C832.8,612.8 813.7,615.4 802,616.5C790.3,617.6 774.2,618.1 768.7,618.4C768.4,618.5 767.3,618.6 766.9,619C766.5,619.4 766.3,620.5 766.2,620.8L766.2,628.6C766.4,629 766.9,630.3 767.5,630.8C768.1,631.3 769.6,631.5 770,631.6L845.4,631.6Z"/>
<path fill="#fff" d="M749.5,608.1h2.6v2.6h-2.6z M774.6,608.1h2.6v2.6h-2.6z M749.5,624.2h2.6v2.6h-2.6z M774.6,624.2h2.6v2.6h-2.6z"/>
<path fill="#008000" d="M866.3,490C871.9,490.8 890.2,493.7 900,494.8C909.8,495.9 920.8,496.3 925,496.6L936.3,497.1L936.3,505L927,505C926.7,505.1 925.6,505.2 925.3,505.5C925,505.8 925,506.8 925,507L925,520.5C925.1,520.8 925.1,521.7 925.4,522C925.7,522.3 926.7,522.4 927,522.5L944.3,522.5C944.6,522.4 945.6,522.3 945.9,522C946.2,521.7 946.2,520.8 946.3,520.5L946.3,505L944.5,503L944.5,497.2C944.8,497.8 945.2,500.3 946,501C946.8,501.7 948.3,501.5 949,501.3C949.7,501.1 949.7,500.7 950,500C950.3,499.3 950.5,497.7 950.6,497.2C956.3,496.8 974.3,496 985,494.8C995.7,493.6 1010,490.8 1015,490C1016.2,493.3 1020.1,503.1 1022,510C1023.9,516.9 1025.6,524.4 1026.5,531.4C1027.4,538.4 1027.5,544.9 1027.3,552C1027,559.1 1025.4,570.2 1025,573.8C1018.3,575.1 999,579.8 985,581.5C971,583.2 955.8,583.8 941.3,583.8C926.8,583.8 912,583.2 898,581.5C884,579.8 864.2,575.1 857.5,573.8C857.1,570.2 855.6,559.1 855.2,552C854.8,544.9 854.3,538.4 855,531.4C855.7,524.4 857.4,516.9 859.3,510C861.2,503.1 865.1,493.3 866.3,490Z M866.3,432C871.9,432.8 888.3,435.4 900,436.5C911.7,437.6 930.2,438.4 936.3,438.8L936.3,446.3L927,446.6C926.7,446.7 925.6,446.7 925.3,447C925,447.3 925,448.2 925,448.5L925,454.5C920,454.2 905.8,453.9 895,452.5C884.2,451.1 865.8,447.3 860,446.3Z M944.5,438.8C944.8,439.4 945.2,441.9 946,442.6C946.8,443.3 948.3,443.1 949,442.9C949.7,442.7 949.7,442.3 950,441.6C950.3,440.9 950.5,439.3 950.6,438.9C956.3,438.5 974.3,437.6 985,436.5C995.7,435.4 1010,432.8 1015,432L1022,446.3C1015.8,447.3 997,451.1 985,452.5C973,453.9 955.8,454.2 950,454.5C949.9,453.9 950.1,452.2 949.5,451C948.9,449.8 946.8,448.1 946.3,447.5Z M865,452C870.8,452.8 888.1,455.4 900,456.5C911.9,457.6 930.2,458.4 936.3,458.8L936.3,466.3L927,466.8C926.7,466.9 925.6,466.9 925.3,467.2C925,467.5 925,468.5 925,468.8L925,475L858.8,475Z M944.5,458.8C944.8,459.4 945.2,461.9 946,462.6C946.8,463.3 948.3,463.1 949,462.9C949.7,462.7 949.7,462.3 950,461.6C950.3,460.9 950.5,459.3 950.6,458.9C956.3,458.5 974,457.6 985,456.5C996,455.4 1011.1,452.8 1016.3,452L1024.3,475L947.5,475C947.5,474.2 947.7,471.4 947.5,470C947.3,468.6 946.5,466.9 946.3,466.3Z"/>
<path fill="#000" d="M1016.3,646.2C1010.7,647 992.4,649.9 982.6,651C972.8,652.1 961.8,652.5 957.6,652.8L946.3,653.3L946.3,661.2L955.6,661.2C955.9,661.3 957,661.4 957.3,661.7C957.6,662 957.5,663 957.6,663.2L957.6,676.7C957.5,677 957.5,677.9 957.2,678.2C956.9,678.5 955.9,678.6 955.6,678.7L938.3,678.7C938,678.6 937,678.5 936.7,678.2C936.4,677.9 936.4,677 936.3,676.7L936.3,661.2L938.1,659.2L938.1,653.4C937.8,654 937.3,656.5 936.6,657.2C935.8,657.9 934.3,657.7 933.6,657.5C932.9,657.3 932.9,656.9 932.6,656.2C932.3,655.5 932.1,653.9 932,653.4C926.3,653 908.3,652.2 897.6,651C886.9,649.8 872.6,647 867.6,646.2C866.4,649.5 862.5,659.3 860.6,666.2C858.7,673.1 857,680.6 856.1,687.6C855.2,694.6 855,701.1 855.3,708.2C855.5,715.3 857.2,726.4 857.6,730C864.3,731.3 883.6,736 897.6,737.7C911.5,739.4 926.8,740 941.3,740C955.8,740 970.6,739.4 984.6,737.7C998.6,736 1018.3,731.3 1025.1,730C1025.5,726.4 1027,715.3 1027.4,708.2C1027.8,701.1 1028.3,694.6 1027.6,687.6C1026.9,680.6 1025.2,673.1 1023.3,666.2C1021.4,659.3 1017.5,649.5 1016.3,646.2Z M1016.3,588.2C1010.7,589 994.3,591.6 982.6,592.7C970.9,593.8 952.3,594.6 946.3,595L946.3,602.5L955.6,602.8C955.9,602.9 957,602.9 957.3,603.2C957.6,603.5 957.5,604.5 957.6,604.7L957.6,610.7C962.6,610.4 976.8,610.1 987.6,608.7C998.4,607.3 1016.8,603.5 1022.6,602.5Z M938.1,595C937.8,595.6 937.3,598.1 936.6,598.8C935.8,599.5 934.3,599.3 933.6,599.1C932.9,598.9 932.9,598.5 932.6,597.8C932.3,597.1 932.1,595.5 932,595.1C926.3,594.7 908.3,593.9 897.6,592.7C886.9,591.6 872.6,589 867.6,588.2L860.6,602.5C866.8,603.5 885.6,607.3 897.6,608.7C909.6,610.1 926.8,610.4 932.6,610.7C932.7,610.1 932.5,608.4 933.1,607.2C933.7,606 935.8,604.3 936.3,603.7Z M1017.6,608.2C1011.8,609 994.5,611.6 982.6,612.7C970.7,613.8 952.3,614.6 946.3,615L946.3,622.5L955.6,623C955.9,623.1 957,623.1 957.3,623.4C957.6,623.7 957.5,624.7 957.6,625L957.6,631.2L1023.8,631.2Z M938.1,615C937.8,615.6 937.3,618.1 936.6,618.8C935.8,619.5 934.3,619.3 933.6,619.1C932.9,618.9 932.9,618.5 932.6,617.8C932.3,617.1 932.1,615.5 932,615.1C926.3,614.7 908.5,613.9 897.6,612.7C886.6,611.6 871.5,609 866.3,608.2L858.3,631.2L935.1,631.2C935.1,630.4 934.9,627.7 935.1,626.2C935.3,624.8 936.1,623.1 936.3,622.5Z"/>
<path fill="#008000" d="M1195,490C1189.4,490.8 1171.1,493.7 1161.3,494.8C1151.5,495.9 1140.5,496.3 1136.3,496.6L1125,497.1L1125,505L1134.3,505C1134.6,505.1 1135.7,505.2 1136,505.5C1136.3,505.8 1136.2,506.8 1136.3,507L1136.3,520.5C1136.2,520.8 1136.2,521.7 1135.9,522C1135.6,522.3 1134.6,522.4 1134.3,522.5L1117,522.5C1116.7,522.4 1115.7,522.3 1115.4,522C1115.1,521.7 1115.1,520.8 1115,520.5L1115,505L1116.8,503L1116.8,497.2C1116.5,497.8 1116,500.3 1115.3,501C1114.5,501.7 1113,501.5 1112.3,501.3C1111.6,501.1 1111.6,500.7 1111.3,500C1111,499.3 1110.8,497.7 1110.7,497.2C1105,496.8 1087,496 1076.3,494.8C1065.6,493.6 1051.3,490.8 1046.3,490C1045.1,493.3 1041.2,503.1 1039.3,510C1037.4,516.9 1035.7,524.4 1034.8,531.4C1033.9,538.4 1033.8,544.9 1034,552C1034.2,559.1 1035.9,570.2 1036.3,573.8C1043,575.1 1062.3,579.8 1076.3,581.5C1090.2,583.2 1105.5,583.8 1120,583.8C1134.5,583.8 1149.3,583.2 1163.3,581.5C1177.3,579.8 1197,575.1 1203.8,573.8C1204.2,570.2 1205.7,559.1 1206.1,552C1206.5,544.9 1207,538.4 1206.3,531.4C1205.6,524.4 1203.9,516.9 1202,510C1200.1,503.1 1196.2,493.3 1195,490Z M1195,432C1189.4,432.8 1173,435.4 1161.3,436.5C1149.6,437.6 1131,438.4 1125,438.8L1125,446.3L1134.3,446.6C1134.6,446.7 1135.7,446.7 1136,447C1136.3,447.3 1136.2,448.2 1136.3,448.5L1136.3,454.5C1141.3,454.2 1155.5,453.9 1166.3,452.5C1177.1,451.1 1195.5,447.3 1201.3,446.3Z M1116.8,438.8C1116.5,439.4 1116,441.9 1115.3,442.6C1114.5,443.3 1113,443.1 1112.3,442.9C1111.6,442.7 1111.6,442.3 1111.3,441.6C1111,440.9 1110.8,439.3 1110.7,438.9C1105,438.5 1087,437.6 1076.3,436.5C1065.6,435.4 1051.3,432.8 1046.3,432L1039.3,446.3C1045.5,447.3 1064.3,451.1 1076.3,452.5C1088.3,453.9 1105.5,454.2 1111.3,454.5C1111.4,453.9 1111.2,452.2 1111.8,451C1112.4,449.8 1114.5,448.1 1115,447.5Z M1196.3,452C1190.5,452.8 1173.2,455.4 1161.3,456.5C1149.4,457.6 1131,458.4 1125,458.8L1125,466.3L1134.3,466.8C1134.6,466.9 1135.7,466.9 1136,467.2C1136.3,467.5 1136.2,468.5 1136.3,468.8L1136.3,475L1202.5,475Z M1116.8,458.8C1116.5,459.4 1116,461.9 1115.3,462.6C1114.5,463.3 1113,463.1 1112.3,462.9C1111.6,462.7 1111.6,462.3 1111.3,461.6C1111,460.9 1110.8,459.3 1110.7,458.9C1105,458.5 1087.2,457.6 1076.3,456.5C1065.3,455.4 1050.2,452.8 1045,452L1037,475L1113.8,475C1113.8,474.2 1113.6,471.4 1113.8,470C1114,468.6 1114.8,466.9 1115,466.3Z"/>
<path fill="#000" d="M1045,646.2C1050.6,647 1068.9,649.9 1078.7,651C1088.5,652.1 1099.5,652.5 1103.7,652.8L1115,653.3L1115,661.2L1105.7,661.2C1105.4,661.3 1104.3,661.4 1104,661.7C1103.7,662 1103.8,663 1103.7,663.2L1103.7,676.7C1103.8,677 1103.8,677.9 1104.1,678.2C1104.4,678.5 1105.4,678.6 1105.7,678.7L1123,678.7C1123.3,678.6 1124.3,678.5 1124.6,678.2C1124.9,677.9 1124.9,677 1125,676.7L1125,661.2L1123.2,659.2L1123.2,653.4C1123.5,654 1124,656.5 1124.7,657.2C1125.5,657.9 1127,657.7 1127.7,657.5C1128.4,657.3 1128.4,656.9 1128.7,656.2C1129,655.5 1129.2,653.9 1129.3,653.4C1135,653 1153,652.2 1163.7,651C1174.4,649.8 1188.7,647 1193.7,646.2C1194.9,649.5 1198.8,659.3 1200.7,666.2C1202.6,673.1 1204.3,680.6 1205.2,687.6C1206.1,694.6 1206.2,701.1 1206,708.2C1205.8,715.3 1204.1,726.4 1203.7,730C1197,731.3 1177.7,736 1163.7,737.7C1149.8,739.4 1134.5,740 1120,740C1105.5,740 1090.7,739.4 1076.7,737.7C1062.7,736 1043,731.3 1036.2,730C1035.8,726.4 1034.3,715.3 1033.9,708.2C1033.5,701.1 1033,694.6 1033.7,687.6C1034.4,680.6 1036.1,673.1 1038,666.2C1039.9,659.3 1043.8,649.5 1045,646.2Z M1045,588.2C1050.6,589 1067,591.6 1078.7,592.7C1090.4,593.8 1109,594.6 1115,595L1115,602.5L1105.7,602.8C1105.4,602.9 1104.3,602.9 1104,603.2C1103.7,603.5 1103.8,604.5 1103.7,604.7L1103.7,610.7C1098.7,610.4 1084.5,610.1 1073.7,608.7C1062.9,607.3 1044.5,603.5 1038.7,602.5Z M1123.2,595C1123.5,595.6 1124,598.1 1124.7,598.8C1125.5,599.5 1127,599.3 1127.7,599.1C1128.4,598.9 1128.4,598.5 1128.7,597.8C1129,597.1 1129.2,595.5 1129.3,595.1C1135,594.7 1153,593.9 1163.7,592.7C1174.4,591.6 1188.7,589 1193.7,588.2L1200.7,602.5C1194.5,603.5 1175.7,607.3 1163.7,608.7C1151.7,610.1 1134.5,610.4 1128.7,610.7C1128.6,610.1 1128.8,608.4 1128.2,607.2C1127.6,606 1125.5,604.3 1125,603.7Z M1043.7,608.2C1049.5,609 1066.8,611.6 1078.7,612.7C1090.6,613.8 1109,614.6 1115,615L1115,622.5L1105.7,623C1105.4,623.1 1104.3,623.1 1104,623.4C1103.7,623.7 1103.8,624.7 1103.7,625L1103.7,631.2L1037.5,631.2Z M1123.2,615C1123.5,615.6 1124,618.1 1124.7,618.8C1125.5,619.5 1127,619.3 1127.7,619.1C1128.4,618.9 1128.4,618.5 1128.7,617.8C1129,617.1 1129.2,615.5 1129.3,615.1C1135,614.7 1152.8,613.9 1163.7,612.7C1174.7,611.6 1189.8,609 1195,608.2L1203,631.2L1126.2,631.2C1126.2,630.4 1126.4,627.7 1126.2,626.2C1126,624.8 1125.2,623.1 1125,622.5Z M258.2,529.6H322.2V621.4H258.2Z M327.4,530.2H376.2V620.8H327.4Z M381.5,530.2H427.7V620.8H381.5Z"/>
<path fill="#034b79" d="M87.8,560.9C88.1,560.1 88.3,557.1 89.5,556C90.7,554.9 94.2,554.8 95.1,554.5C97.9,554.6 106.7,554.7 112,555C117.3,555.3 122.9,555.9 127.2,556.5C131.5,557.1 134.6,558.2 138,558.8C141.4,559.4 144.4,560 147.7,560C150.9,560 154.1,559.4 157.5,558.8C160.9,558.2 163.7,557.1 168.1,556.5C172.5,555.9 178.6,555.3 184,555C189.4,554.7 197.6,554.6 200.3,554.5C201.2,554.8 204.6,554.9 205.8,556C207,557.1 207.3,560.1 207.6,560.9C208.1,563.6 209.8,571.6 210.5,577C211.2,582.4 211.9,589.1 212,593.1C212.1,597.1 212,598.8 211,601C210,603.2 209.1,604.7 206.1,606.2C203.1,607.7 197.9,609.1 193,610C188.1,610.9 181.9,611.5 176.9,611.5C171.9,611.5 167.9,610.6 163,610C158.1,609.4 152.8,607.7 147.7,607.7C142.6,607.7 137.4,609.4 132.5,610C127.6,610.6 123.6,611.5 118.5,611.5C113.4,611.5 106.9,610.9 102,610C97.1,609.1 92.2,607.7 89.2,606.2C86.2,604.7 85.3,603.2 84.3,601C83.3,598.8 83.3,597.1 83.4,593.1C83.5,589.1 84.3,582.4 85,577C85.7,571.6 87.3,563.6 87.8,560.9Z M64.4,697L68.8,674.9C71.7,673.1 80.2,667.4 86,664C91.8,660.6 98.1,657 103.8,654.4C109.5,651.8 114.6,649.9 120,648.2C125.4,646.5 130.2,645.1 136,644.2C141.8,643.3 148.4,642.9 155,642.6C161.6,642.3 172.1,642.3 175.5,642.2L164.6,692.4L164.6,697Z M64.4,698L68.8,720.1C71.7,721.9 80.2,727.6 86,731C91.8,734.4 98.1,738 103.8,740.6C109.5,743.2 114.6,745.1 120,746.8C125.4,748.5 130.2,749.9 136,750.8C141.8,751.7 148.4,752.1 155,752.4C161.6,752.7 172.1,752.7 175.5,752.8L164.6,702.6L164.6,698Z M177.5,644.2C183.8,644.4 202.7,644.7 215,645.2C227.3,645.7 245.3,646.8 251.4,647.1L255.8,666.1C255.8,668.6 255.8,675.9 255.6,681C255.4,686.1 254.6,694.3 254.4,697L173.4,697L173.4,692.4Z M177.5,750.8C183.8,750.6 202.7,750.3 215,749.8C227.3,749.3 245.3,748.2 251.4,747.9L255.8,728.9C255.8,726.4 255.8,719.1 255.6,714C255.4,708.9 254.6,700.7 254.4,698L173.4,698L173.4,702.6Z M258.7,659.7C261.6,659.9 270.1,660.3 276,660.8C281.9,661.3 289.8,661.9 293.8,662.6C297.8,663.3 298.1,663.9 300,665C301.9,666.1 303,666.7 305.5,669.1C308,671.5 311.8,675.9 315,679.5C318.2,683.1 322.9,689.1 324.5,691C324.6,691.4 325.3,692.8 325.3,693.5C325.3,694.2 325.1,694.9 324.5,695.4C323.9,695.9 322.7,696 321.5,696.2C320.3,696.4 317.9,696.5 317.2,696.5L276.3,696.5C275.3,696.2 272,695.7 270.5,694.5C269,693.3 268,690.3 267.5,689.5Z M258.7,735.3C261.6,735.1 270.1,734.7 276,734.2C281.9,733.7 289.8,733.1 293.8,732.4C297.8,731.7 298.1,731.1 300,730C301.9,728.9 303,728.3 305.5,725.9C308,723.5 311.8,719.1 315,715.5C318.2,711.9 322.9,705.9 324.5,704C324.6,703.6 325.3,702.2 325.3,701.5C325.3,700.8 325.1,700.1 324.5,699.6C323.9,699.1 322.7,699 321.5,698.8C320.3,698.6 317.9,698.5 317.2,698.5L276.3,698.5C275.3,698.8 272,699.3 270.5,700.5C269,701.7 268,704.7 267.5,705.5Z M387.9,642.8L410.7,638.4L406.4,737.7L351.7,747.4C351.8,744.2 351.9,734.2 352.5,728C353.1,721.8 353.9,715.8 355.2,710C356.4,704.2 358.1,698.4 360,693C361.9,687.6 364.1,683.3 366.9,677.8C369.7,672.3 373.5,665.8 377,660C380.5,654.2 386.1,645.7 387.9,642.8Z M413.7,638.4L435.6,642.8C438.3,646.8 446.9,658.7 452,667C457.1,675.3 463.1,683.6 466.3,692.4C469.5,701.2 469.8,710.8 471,720C472.2,729.2 473.2,742.8 473.6,747.4L418,737.7Z"/><path d="M64.400,697.500H164.600M173.400,697.500H254.400" stroke="#86a7bf" fill="none"/></g>
<rect x="195.500" y="318.500" width="20.500" height="5" rx="2" fill="#fff"/><rect x="198.500" y="316" width="2.500" height="4" fill="#fff"/>
<text x="665.4" y="449.6" textLength="185.2" lengthAdjust="spacingAndGlyphs" font-family="Liberation Sans,sans-serif" font-weight="bold" font-size="20" fill="#a40000" stroke="#fff" stroke-width="2.500" stroke-linejoin="round" paint-order="stroke">Green Patterns are mirrored versions</text>
<text x="671.8" y="473.7" textLength="172.5" lengthAdjust="spacingAndGlyphs" font-family="Liberation Sans,sans-serif" font-weight="bold" font-size="20" fill="#a40000" stroke="#fff" stroke-width="2.500" stroke-linejoin="round" paint-order="stroke">of the other patterns below, please</text>
<text x="665.4" y="498.1" textLength="185.2" lengthAdjust="spacingAndGlyphs" font-family="Liberation Sans,sans-serif" font-weight="bold" font-size="20" fill="#a40000" stroke="#fff" stroke-width="2.500" stroke-linejoin="round" paint-order="stroke">verify that your car has driver side or</text>
<text x="695.3" y="522.3" textLength="121.9" lengthAdjust="spacingAndGlyphs" font-family="Liberation Sans,sans-serif" font-weight="bold" font-size="20" fill="#a40000" stroke="#fff" stroke-width="2.500" stroke-linejoin="round" paint-order="stroke">passenger side cut outs.</text>
<text x="700.4" y="546.6" textLength="117.6" lengthAdjust="spacingAndGlyphs" font-family="Liberation Sans,sans-serif" font-weight="bold" font-size="20" fill="#a40000" stroke="#fff" stroke-width="2.500" stroke-linejoin="round" paint-order="stroke">Check before CUTTING.</text>
<rect x="59.5" y="255" width="7" height="7" fill="#000"/>
<rect x="59.5" y="294" width="7" height="7" fill="#000"/>
<rect x="59.5" y="334" width="7" height="7" fill="#000"/>
<rect x="240" y="255" width="7" height="7" fill="#000"/>
<rect x="240" y="334" width="7" height="7" fill="#000"/>
<rect x="421" y="255" width="7" height="7" fill="#000"/>
<rect x="421" y="294" width="7" height="7" fill="#000"/>
<rect x="421" y="334" width="7" height="7" fill="#000"/>
<circle cx="80.7" cy="277.5" r="2.300" fill="#fff" stroke="#000" stroke-width="0.900"/>
<circle cx="328.5" cy="277.3" r="2.300" fill="#fff" stroke="#000" stroke-width="0.900"/>
<circle cx="121" cy="324.5" r="2.300" fill="#fff" stroke="#000" stroke-width="0.900"/>
<circle cx="289" cy="324.5" r="2.300" fill="#fff" stroke="#000" stroke-width="0.900"/>
<circle cx="360.5" cy="294.5" r="2.300" fill="#fff" stroke="#000" stroke-width="0.900"/>
<circle cx="394.5" cy="294.5" r="2.300" fill="#fff" stroke="#000" stroke-width="0.900"/>
<circle cx="353" cy="302.3" r="2.300" fill="#fff" stroke="#000" stroke-width="0.900"/>
<circle cx="403.2" cy="302.3" r="2.300" fill="#fff" stroke="#000" stroke-width="0.900"/>
<circle cx="209.5" cy="325" r="2.300" fill="#fff" stroke="#000" stroke-width="0.900"/>
</g>
<path d="M53.500,197V757" stroke="#f00" stroke-width="1.500" stroke-dasharray="9 6 2.500 6.500" fill="none"/>
<path d="M30,189H1225" stroke="#8c8c8c" stroke-width="2" fill="none"/>
<path d="M52,188V776" stroke="#8c8c8c" stroke-width="2" fill="none"/>
<path d="M65.5,182V187M78.5,182V187M90.5,182V187M102.5,182V187M115.5,182V187M127.5,182V187M140.5,182V187M152.5,182V187M164.5,182V187M189.5,182V187M202.5,182V187M214.5,182V187M226.5,182V187M239.5,182V187M251.5,182V187M263.5,182V187M276.5,182V187M288.5,182V187M313.5,182V187M325.5,182V187M338.5,182V187M350.5,182V187M362.5,182V187M375.5,182V187M387.5,182V187M400.5,182V187M412.5,182V187M437.5,182V187M449.5,182V187M461.5,182V187M474.5,182V187M486.5,182V187M498.5,182V187M511.5,182V187M523.5,182V187M536.5,182V187M560.5,182V187M573.5,182V187M585.5,182V187M598.5,182V187M610.5,182V187M622.5,182V187M635.5,182V187M647.5,182V187M659.5,182V187M684.5,182V187M696.5,182V187M709.5,182V187M721.5,182V187M734.5,182V187M746.5,182V187M758.5,182V187M771.5,182V187M783.5,182V187M808.5,182V187M820.5,182V187M833.5,182V187M845.5,182V187M857.5,182V187M870.5,182V187M882.5,182V187M894.5,182V187M907.5,182V187M932.5,182V187M944.5,182V187M956.5,182V187M969.5,182V187M981.5,182V187M994.5,182V187M1006.5,182V187M1018.5,182V187M1031.5,182V187M1055.5,182V187M1068.5,182V187M1080.5,182V187M1092.5,182V187M1105.5,182V187M1117.5,182V187M1130.5,182V187M1142.5,182V187M1154.5,182V187M1179.5,182V187M1192.5,182V187M1204.5,182V187M1216.5,182V187M53.5,177V187M177.5,177V187M300.5,177V187M424.5,177V187M548.5,177V187M672.5,177V187M796.5,177V187M919.5,177V187M1043.5,177V187M1167.5,177V187" stroke="#000" fill="none" shape-rendering="crispEdges"/>
<text x="177.2" y="175.800" text-anchor="middle" font-size="10" font-family="Liberation Sans,sans-serif">100</text>
<text x="301" y="175.800" text-anchor="middle" font-size="10" font-family="Liberation Sans,sans-serif">200</text>
<text x="424.8" y="175.800" text-anchor="middle" font-size="10" font-family="Liberation Sans,sans-serif">300</text>
<text x="548.5" y="175.800" text-anchor="middle" font-size="10" font-family="Liberation Sans,sans-serif">400</text>
<text x="672.2" y="175.800" text-anchor="middle" font-size="10" font-family="Liberation Sans,sans-serif">500</text>
<text x="796" y="175.800" text-anchor="middle" font-size="10" font-family="Liberation Sans,sans-serif">600</text>
<text x="919.8" y="175.800" text-anchor="middle" font-size="10" font-family="Liberation Sans,sans-serif">700</text>
<text x="1043.5" y="175.800" text-anchor="middle" font-size="10" font-family="Liberation Sans,sans-serif">800</text>
<text x="1167.2" y="175.800" text-anchor="middle" font-size="10" font-family="Liberation Sans,sans-serif">900</text>
<text x="50" y="175.800" font-size="10" font-family="Liberation Sans,sans-serif" clip-path="url(#c0)">0</text>
<text x="33" y="179" font-size="10" font-family="Liberation Sans,sans-serif">cm</text>
<path d="M435.500,168V188" stroke="#000" stroke-dasharray="3 2" fill="none" shape-rendering="crispEdges"/>
<path d="M30,194.500H51" stroke="#000" stroke-dasharray="3 2" fill="none" shape-rendering="crispEdges"/>
<path d="M44,745.5H51M44,732.5H51M44,720.5H51M44,707.5H51M44,695.5H51M44,683.5H51M44,670.5H51M44,658.5H51M44,645.5H51M44,621.5H51M44,608.5H51M44,596.5H51M44,583.5H51M44,571.5H51M44,559.5H51M44,546.5H51M44,534.5H51M44,521.5H51M44,497.5H51M44,484.5H51M44,472.5H51M44,459.5H51M44,447.5H51M44,435.5H51M44,422.5H51M44,410.5H51M44,397.5H51M44,373.5H51M44,360.5H51M44,348.5H51M44,335.5H51M44,323.5H51M44,311.5H51M44,298.5H51M44,286.5H51M44,273.5H51M44,249.5H51M44,236.5H51M44,224.5H51M44,211.5H51M44,199.5H51M39,757.5H51M39,633.5H51M39,509.5H51M39,385.5H51M39,261.5H51" stroke="#000" fill="none" shape-rendering="crispEdges"/>
<text transform="translate(39.500,633.5) rotate(-90)" text-anchor="middle" font-size="10" font-family="Liberation Sans,sans-serif">100</text>
<text transform="translate(39.500,509.5) rotate(-90)" text-anchor="middle" font-size="10" font-family="Liberation Sans,sans-serif">200</text>
<text transform="translate(39.500,385.5) rotate(-90)" text-anchor="middle" font-size="10" font-family="Liberation Sans,sans-serif">300</text>
<text transform="translate(39.500,261.5) rotate(-90)" text-anchor="middle" font-size="10" font-family="Liberation Sans,sans-serif">400</text>
<rect x="33.500" y="755" width="6" height="5" rx="2.500" fill="#fff" stroke="#000"/>
<path d="M1211,201l3.750-3.750 3.750,3.750M1211,747l3.750,3.750 3.750-3.750M62.500,761.750l-3.750,3.750 3.750,3.750M1196,761.750l3.750,3.750 -3.750,3.750" stroke="#505050" stroke-width="2" fill="none"/>
</svg>
<div class="a" style="left:1423px;top:166px;width:24px;height:610px;background:#e1e1e1"></div>
<div class="a" style="left:1425px;top:169.5px;width:23px;height:114px;border:1px solid #9c9c9c;border-right:0;border-radius:6px 0 0 6px;background:#e6e6e6"></div>
<div class="t" style="left:1443px;top:172.500px;transform-origin:0 0;transform:rotate(90deg) scaleX(0.940);font-size:13px;line-height:15px;color:#686868">Zoom Navigator</div>
<div class="a" style="left:1229px;top:166px;width:194px;height:23.5px;background:#c6c6c6;border-top:1px solid #b4b4b4;border-bottom:1px solid #b4b4b4"></div>
<div class="t" style="left:1234px;top:169.5px;font-size:13px;line-height:15px;transform:scaleX(0.914);transform-origin:0 0;">Control center</div>
<svg class="a" style="left:1372px;top:171px" width="50" height="16" viewBox="0 0 50 16"><path d="M3,6h8.500l-4.250,4.500z" fill="#000"/><path d="M22,4.500h5M21,9.500h7M24.500,9.500v4M22.500,4.500v5" stroke="#000" fill="none"/><rect x="25" y="4" width="2" height="5.500" fill="#000"/><path d="M36.500,4l7,7m0,-7l-7,7" stroke="#000" stroke-width="1.700" fill="none"/></svg>
<div class="a" style="left:1235px;top:198px;width:180px;height:223px;background:#fff;border:1px solid #828790"></div>
<div class="a" style="left:1397px;top:199px;width:17px;height:221px;background:#f0f0f0"></div>
<div class="a" style="left:1398px;top:216px;width:15px;height:89px;background:#cdcdcd"></div>
<div class="a" style="left:1277.5px;top:218px;width:36px;height:16.5px;background:#ececec"></div>
<div class="t" style="left:1280px;top:202.5px;font-size:11.5px;line-height:13.5px;transform:scaleX(0.918);transform-origin:0 0;">Workspace</div>
<div class="t" style="left:1280px;top:219.5px;font-size:11.5px;line-height:13.5px;transform:scaleX(0.866);transform-origin:0 0;">Design</div>
<div class="t" style="left:1298.7px;top:236.5px;font-size:11.5px;line-height:13.5px;transform:scaleX(1.057);transform-origin:0 0;">Text</div>
<div class="t" style="left:1298.7px;top:253.5px;font-size:11.5px;line-height:13.5px;transform:scaleX(0.914);transform-origin:0 0;">Rectangles</div>
<div class="t" style="left:1298.7px;top:270.5px;font-size:11.5px;line-height:13.5px;transform:scaleX(0.871);transform-origin:0 0;">Ellipses</div>
<div class="t" style="left:1298.7px;top:287.5px;font-size:11.5px;line-height:13.5px;transform:scaleX(0.920);transform-origin:0 0;">Polygons</div>
<div class="t" style="left:1298.7px;top:304.5px;font-size:11.5px;line-height:13.5px;transform:scaleX(0.950);transform-origin:0 0;">Stars</div>
<div class="t" style="left:1298.7px;top:321.5px;font-size:11.5px;line-height:13.5px;transform:scaleX(0.902);transform-origin:0 0;">Digitize</div>
<div class="t" style="left:1298.7px;top:338.5px;font-size:11.5px;line-height:13.5px;transform:scaleX(0.916);transform-origin:0 0;">Free Hand Drawing</div>
<div class="t" style="left:1298.7px;top:355.5px;font-size:11.5px;line-height:13.5px;transform:scaleX(0.924);transform-origin:0 0;">Outlines</div>
<div class="t" style="left:1298.7px;top:372.5px;font-size:11.5px;line-height:13.5px;transform:scaleX(0.920);transform-origin:0 0;">Shadows</div>
<div class="t" style="left:1280px;top:389.5px;font-size:11.5px;line-height:13.5px;transform:scaleX(0.903);transform-origin:0 0;">Nodes</div>
<div class="t" style="left:1280px;top:406.5px;font-size:11.5px;line-height:13.5px;transform:scaleX(0.911);transform-origin:0 0;">Alignment</div>
<svg class="a" style="left:0;top:0" width="1447" height="421" viewBox="0 0 1447 421"><defs><clipPath id="tc"><rect x="1236" y="199" width="178" height="221"/></clipPath></defs><g clip-path="url(#tc)"><path d="M1248.500,213v200M1252,209.500h7M1252,226.500h10M1249,396.500h11M1249,413.500h10M1267.500,233v146M1268,243.500h11M1268,260.500h12M1268,277.500h11M1268,294.500h12M1268,311.500h12M1268,328.500h10M1268,345.500h10M1268,362.500h11M1268,379.500h10" stroke="#888" stroke-dasharray="1 1" fill="none" shape-rendering="crispEdges"/>
<rect x="1244.500" y="204.5" width="8" height="8" rx="1" fill="#fff" stroke="#8a8a8a"/>
<path d="M1246.500,208.5h4" stroke="#3050a0"/>
<rect x="1244.500" y="221.5" width="8" height="8" rx="1" fill="#fff" stroke="#8a8a8a"/>
<path d="M1246.500,225.5h4" stroke="#3050a0"/>
<path d="M1248.500,206.500v4" stroke="#3050a0"/>
<g transform="translate(1259,200)"><path d="M1.500,0.500h7l3,3v9h-10z" fill="#fff" stroke="#000"/><rect x="3" y="2" width="3" height="3" fill="#f00"/><path d="M3,8h3M4.500,6.500v3" stroke="#008000"/><path d="M4,12l9-8 3,1.500-9,8z" fill="#ddd" stroke="#000"/><path d="M4,12v2.500h5" fill="none" stroke="#000"/><path d="M7,11l6-5.500M8.500,12l6-5.500" stroke="#000" stroke-width="0.600"/></g>
<g transform="translate(1262.5,218)"><path d="M0.500,0v13l3-3 2.500,5.500 2.200-1-2.500-5.500h4.300z" fill="#000"/></g>
<text x="1280" y="249" font-family="Liberation Serif,serif" font-weight="bold" font-size="17" fill="#000080">T</text>
<rect x="1281.500" y="255" width="9" height="9" fill="#008000" stroke="#003800"/>
<path d="M1283,270.500h6l3,3v5.500l-3,3h-6l-3-3v-5.500z" fill="#f00" stroke="#800" stroke-width="0.600"/>
<path d="M1286,289l5,3.700-1.900,5.500h-6.200l-1.900-5.500z" fill="#ffff00" stroke="#000" stroke-width="0.900"/>
<g transform="translate(1271,-52.5)"><path d="M15,357l1.700,4.600h4.800l-3.800,3 1.400,4.800-4.100-2.900-4.100,2.900 1.400-4.800-3.800-3h4.800z" fill="#0000e0" stroke="#000060" stroke-width="0.500"/></g>
<g transform="translate(1278,319)"><rect x="0.500" y="3.500" width="10" height="10" fill="#fff" stroke="#f00"/><text x="1.500" y="12.500" font-family="Liberation Sans,sans-serif" font-size="11" fill="#888">a</text><g transform="translate(6,-1) scale(0.850)"><path d="M1,13l1.500-5 6-7.500 3,2.500-6,7.500z" fill="#ffff00" stroke="#000" stroke-width="0.900"/><path d="M8.500,0.500l3,2.500-1.500,1.800-3-2.500z" fill="#800000" stroke="#000" stroke-width="0.600"/><path d="M1,13l0.800-2.800 1.600,1.400z" fill="#000"/></g></g>
<g transform="translate(1278,336)"><path d="M1,13l1.500-5 6-7.500 3,2.500-6,7.500z" fill="#ffff00" stroke="#000" stroke-width="0.900"/><path d="M8.500,0.500l3,2.500-1.500,1.800-3-2.500z" fill="#800000" stroke="#000" stroke-width="0.600"/><path d="M1,13l0.800-2.800 1.600,1.400z" fill="#000"/><path d="M3,15c3,1 5-6 12-6.500" fill="none" stroke="#000080"/></g>
<text x="1279" y="368.500" font-family="Liberation Sans,sans-serif" font-weight="bold" font-size="19" fill="#0000f0" stroke="#f00" stroke-width="1.600" paint-order="stroke">T</text>
<text x="1283" y="385.500" font-family="Liberation Serif,serif" font-weight="bold" font-size="16.500" fill="#f00">A</text><text x="1278.500" y="384" font-family="Liberation Serif,serif" font-weight="bold" font-size="16.500" fill="#00f">A</text>
<g transform="translate(1260,388)"><path d="M1,14c0.500-6 4-9 9-14" fill="none" stroke="#000" stroke-width="1.100"/><path d="M5,5l6,7" stroke="#800"/><path d="M6,7.500v7l2-2 1.500,3 1.200-0.600-1.500-3h3z" fill="#000"/></g>
<g transform="translate(1259,407)"><rect x="1" y="1" width="5" height="8" fill="#008000"/><path d="M5,1l3,8h-4z" fill="#ffff00"/><circle cx="12" cy="5.500" r="3.800" fill="#f00"/><path d="M0,10.500h16" stroke="#000" stroke-dasharray="1 1"/></g>
<path d="M1401.500,210l4-4 4,4M1401.500,407l4,4 4-4" stroke="#444" stroke-width="1.700" fill="none"/></g></svg>
<div class="a" style="left:1280px;top:428.5px;width:41px;height:19.5px;border:1px solid #d9d9d9;border-bottom:0;background:#f0f0f0"></div>
<div class="a" style="left:1320px;top:428.5px;width:41px;height:19.5px;border:1px solid #d9d9d9;border-bottom:0;background:#f0f0f0"></div>
<div class="a" style="left:1236px;top:447px;width:176px;height:259px;background:#fff;border:1px solid #d9d9d9"></div>
<div class="a" style="left:1236px;top:426.5px;width:45px;height:22px;background:#fff;border:1px solid #d9d9d9;border-bottom:0"></div>
<svg class="a" style="left:1243px;top:428px" width="20" height="17" viewBox="0 0 20 17"><path d="M3,1.500h10M3.500,0v3M12.500,0v3M16.500,4v10M15,4.500h3M15,13.500h3" stroke="#000" fill="none"/><rect x="3.500" y="4.500" width="9" height="9" fill="#008000" stroke="#003000"/><path d="M0,13l4,4M4,13l-4,4" stroke="#000" stroke-width="0.800"/></svg>
<svg class="a" style="left:1285px;top:429px" width="17" height="17" viewBox="0 0 17 17"><path d="M7.500,4.500l5,5-5,5-5-5z" fill="#f00" stroke="#600" stroke-width="0.500"/><path d="M1.500,6c3-5 9-5 12-1" fill="none" stroke="#000" stroke-width="1.100"/><path d="M14.500,2.500v4.500h-4z" fill="#000"/></svg>
<svg class="a" style="left:1328px;top:429px" width="17" height="17" viewBox="0 0 17 17"><path d="M4,5.500h10.500l-3.500,8h-10.500z" fill="#ffff00" stroke="#555" stroke-width="0.800"/><path d="M4,2.500h9" stroke="#000" stroke-width="1.100"/><path d="M12,0.500l3,2-3,2z" fill="#000"/></svg>
<div class="t" style="left:1249.3px;top:453.7px;font-size:12px;line-height:14px;transform:scaleX(0.840);transform-origin:0 0;">Size:</div>
<div class="a" style="left:1251px;top:470px;width:68px;height:22px;background:#fff;border:1px solid #7a7a7a"></div>
<div class="a" style="left:1301px;top:472px;width:15px;height:18px;background:#ececec;border-left:1px solid #d8d8d8"></div>
<svg class="a" style="left:1301px;top:472px" width="15" height="18" viewBox="0 0 15 18"><path d="M4.500,7.5 l3-3.500 3,3.500zM4.500,10.5 l3,3.500 3-3.500z" fill="#111"/><path d="M2,9h11" stroke="#d0d0d0"/></svg>
<div class="t" style="left:1257.9px;top:474.5px;font-size:11px;line-height:13px;color:#000;">272.65 c</div>
<div class="t" style="left:1321.7px;top:474.5px;font-size:12px;line-height:14px;transform:scaleX(0.833);transform-origin:0 0;">x</div>
<div class="a" style="left:1331px;top:470px;width:68px;height:22px;background:#fff;border:1px solid #7a7a7a"></div>
<div class="a" style="left:1381px;top:472px;width:15px;height:18px;background:#ececec;border-left:1px solid #d8d8d8"></div>
<svg class="a" style="left:1381px;top:472px" width="15" height="18" viewBox="0 0 15 18"><path d="M4.500,7.5 l3-3.500 3,3.500zM4.500,10.5 l3,3.500 3-3.500z" fill="#111"/><path d="M2,9h11" stroke="#d0d0d0"/></svg>
<div class="t" style="left:1337.9px;top:474.5px;font-size:11px;line-height:13px;transform:scaleX(0.931);transform-origin:0 0;color:#000;">43.94 cm</div>
<div class="a" style="left:1269px;top:509.5px;width:22.5px;height:22px;background:#cce4f7;border:1px solid #3287d8"></div>
<svg class="a" style="left:1272px;top:512px" width="17" height="17" viewBox="0 0 17 17"><rect x="1" y="6" width="9" height="9" fill="#e00" stroke="#600" stroke-width="0.600"/><path d="M1,3.500h9M1.500,2v3M9.500,2v3M13.500,6v9M12,6.500h3M12,14.500h3" stroke="#000" fill="none"/><path d="M11,4l3-3.500M11.500,1h0.800M13.300,3.500h0.800" stroke="#000" stroke-width="0.900"/></svg>
<div class="a" style="left:1295px;top:511.5px;width:75px;height:22px;background:#fff;border:1px solid #7a7a7a"></div>
<div class="a" style="left:1352px;top:513.5px;width:15px;height:18px;background:#ececec;border-left:1px solid #d8d8d8"></div>
<svg class="a" style="left:1352px;top:513.5px" width="15" height="18" viewBox="0 0 15 18"><path d="M4.500,7.5 l3-3.500 3,3.500zM4.500,10.5 l3,3.500 3-3.500z" fill="#111"/><path d="M2,9h11" stroke="#d0d0d0"/></svg>
<div class="t" style="left:1304px;top:516px;font-size:11px;line-height:13px;transform:scaleX(1.011);transform-origin:0 0;color:#000;">100.00 %</div>
<div class="t" style="left:1253.6px;top:543.5px;font-size:12px;line-height:14px;transform:scaleX(0.873);transform-origin:0 0;">Position:</div>
<div class="a" style="left:1251px;top:558px;width:68px;height:22px;background:#fff;border:1px solid #7a7a7a"></div>
<div class="a" style="left:1301px;top:560px;width:15px;height:18px;background:#ececec;border-left:1px solid #d8d8d8"></div>
<svg class="a" style="left:1301px;top:560px" width="15" height="18" viewBox="0 0 15 18"><path d="M4.500,7.5 l3-3.500 3,3.500zM4.500,10.5 l3,3.500 3-3.500z" fill="#111"/><path d="M2,9h11" stroke="#d0d0d0"/></svg>
<div class="t" style="left:1257.9px;top:562.5px;font-size:11px;line-height:13px;transform:scaleX(0.931);transform-origin:0 0;color:#000;">18.04 cm</div>
<div class="t" style="left:1324.5px;top:562.5px;font-size:12px;line-height:14px;transform:scaleX(0.915);transform-origin:0 0;">,</div>
<div class="a" style="left:1331px;top:558px;width:68px;height:22px;background:#fff;border:1px solid #7a7a7a"></div>
<div class="a" style="left:1381px;top:560px;width:15px;height:18px;background:#ececec;border-left:1px solid #d8d8d8"></div>
<svg class="a" style="left:1381px;top:560px" width="15" height="18" viewBox="0 0 15 18"><path d="M4.500,7.5 l3-3.500 3,3.500zM4.500,10.5 l3,3.500 3-3.500z" fill="#111"/><path d="M2,9h11" stroke="#d0d0d0"/></svg>
<div class="t" style="left:1337.9px;top:562.5px;font-size:11px;line-height:13px;color:#000;">348.28 c</div>
<div class="a" style="left:1411px;top:646px;width:4.5px;height:27px;background:#f0f0f0;border:1px solid #a8a8a8"></div>
<div class="a" style="left:1244px;top:721px;width:13px;height:13px;background:#fff;border:1px solid #333"></div>
<div class="t" style="left:1259.5px;top:720.5px;font-size:12px;line-height:14px;transform:scaleX(0.860);transform-origin:0 0;">Keep Original</div>
<div class="a" style="left:1236px;top:745px;width:73px;height:21.5px;background:#cfcfcf;border:1px solid #bfbfbf"></div>
<svg class="a" style="left:1245px;top:749px" width="16" height="14" viewBox="0 0 16 14"><path d="M2,7l3.500,4 8-9" stroke="#a8a8a8" stroke-width="1.500" fill="none"/></svg>
<div class="t" style="left:1270.5px;top:749.5px;font-size:12px;line-height:14px;transform:scaleX(0.833);transform-origin:0 0;color:#8c8c8c;text-shadow:1px 1px 0 #fff;">A<u>p</u>ply</div>
<div class="a" style="left:1367px;top:745px;width:22px;height:21.5px;background:#e1e1e1;border:1px solid #adadad"></div>
<svg class="a" style="left:1371px;top:749px" width="16" height="14" viewBox="0 0 16 14"><path d="M4,5.500c3-3.500 8-2.500 8.500,1.500c0,2.500-1.500,3.500-3,4" stroke="#000080" stroke-width="1.300" fill="none"/><path d="M1,3.500l5.500,0.500-3,4.500z" fill="#000080"/></svg>
<div class="a" style="left:29px;top:776px;width:1417px;height:24px;background:linear-gradient(90deg,#e3e3e3,#e9e9e9 35%,#f6f6f6 80%)"></div>
<div class="a" style="left:29px;top:776px;width:1195px;height:2px;background:#f6f6f6"></div>
<div class="a" style="left:33.5px;top:778px;width:110px;height:23px;border:1px solid #a6a6a6;border-bottom:0;border-radius:4px 4px 0 0;background:#e9e9e9"></div>
<div class="t" style="left:62.5px;top:780.5px;font-size:13px;line-height:15px;transform:scaleX(0.865);transform-origin:0 0;color:#555;">File Browser</div>
<div class="a" style="left:158.5px;top:778px;width:63.5px;height:23px;border:1px solid #a6a6a6;border-bottom:0;border-radius:4px 4px 0 0;background:#e9e9e9"></div>
<div class="t" style="left:163.5px;top:780.5px;font-size:13px;line-height:15px;transform:scaleX(0.890);transform-origin:0 0;color:#555;">Palette</div>
<div class="a" style="left:236.5px;top:778px;width:98.5px;height:23px;border:1px solid #a6a6a6;border-bottom:0;border-radius:4px 4px 0 0;background:#e9e9e9"></div>
<div class="t" style="left:241px;top:780.5px;font-size:13px;line-height:15px;transform:scaleX(0.896);transform-origin:0 0;color:#555;">Visible Colors</div>
<svg class="a" style="left:37px;top:781px" width="14" height="12" viewBox="0 0 14 12"><path d="M0.500,2.500h4l1-2v2h8v9h-13z" fill="#ffff80" stroke="#000"/><rect x="3" y="4" width="2" height="2" fill="#c00"/><rect x="6" y="4" width="2" height="2" fill="#00c"/><rect x="9" y="4" width="2" height="2" fill="#0c0"/><rect x="3" y="7" width="2" height="2" fill="#800"/><rect x="6" y="7" width="2" height="2" fill="#008"/><rect x="9" y="7" width="2" height="2" fill="#0f0"/></svg>
<div class="a" style="left:1px;top:799.5px;width:1445px;height:20.5px;background:#f0f0f0;border-top:1px solid #dadada"></div>
<div class="t" style="left:3.5px;top:803.5px;font-size:12.5px;line-height:14.5px;transform:scaleX(0.885);transform-origin:0 0;color:#4a4a4a;">For Help, press F1</div>
<div class="t" style="left:251px;top:803.5px;font-size:12.5px;line-height:14.5px;transform:scaleX(0.921);transform-origin:0 0;color:#4a4a4a;">9 selected objects (Position: 18.04 cm, 348.28 cm</div>
<div class="t" style="left:518px;top:803.5px;font-size:12.5px;line-height:14.5px;transform:scaleX(0.887);transform-origin:0 0;color:#4a4a4a;">Size: 272.65 cm x 43.94 cm)</div>
<div class="t" style="left:1292px;top:803.5px;font-size:12.5px;line-height:14.5px;transform:scaleX(0.856);transform-origin:0 0;color:#4a4a4a;">401.47, 454.78</div>
<div class="t" style="left:1373.7px;top:803.5px;font-size:12.5px;line-height:14.5px;transform:scaleX(0.913);transform-origin:0 0;color:#4a4a4a;">Changed</div>
<div class="a" style="left:1288px;top:802px;width:1px;height:17px;background:#d4d4d4"></div>
<div class="a" style="left:1370px;top:802px;width:1px;height:17px;background:#d4d4d4"></div>
<div class="a" style="left:1424px;top:802px;width:1px;height:17px;background:#d4d4d4"></div>
<svg class="a" style="left:1432px;top:806px" width="12" height="12" viewBox="0 0 12 12"><g fill="#b4b4b4"><rect x="9" y="1" width="2" height="2"/><rect x="9" y="5" width="2" height="2"/><rect x="9" y="9" width="2" height="2"/><rect x="5" y="5" width="2" height="2"/><rect x="5" y="9" width="2" height="2"/><rect x="1" y="9" width="2" height="2"/></g></svg>
<div class="a" style="left:0px;top:0px;width:1px;height:821px;background:#808080"></div>
<div class="a" style="left:1446px;top:0px;width:1px;height:821px;background:#808080"></div>
<div class="a" style="left:0px;top:819px;width:1447px;height:2px;background:#606060"></div>
</body></html>
